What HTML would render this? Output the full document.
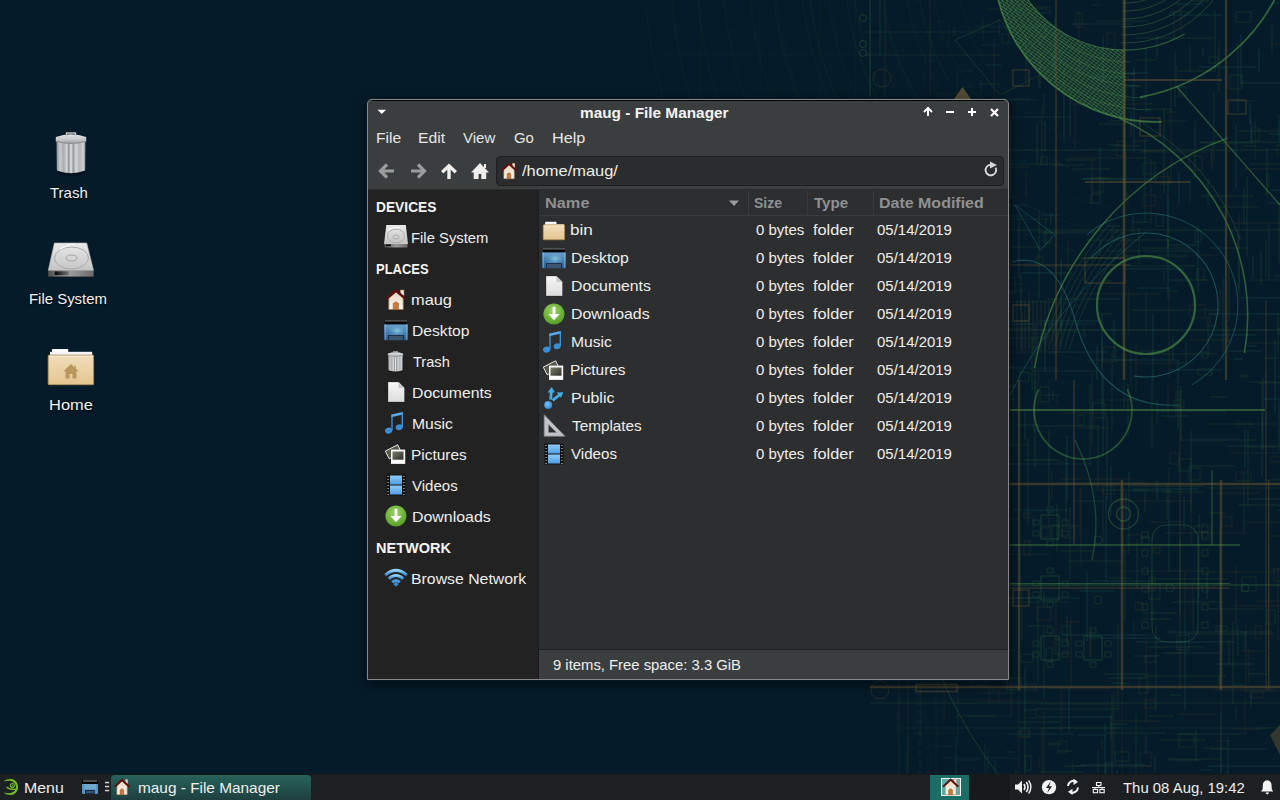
<!DOCTYPE html>
<html><head><meta charset="utf-8">
<style>
*{margin:0;padding:0;box-sizing:border-box}
html,body{width:1280px;height:800px;overflow:hidden;background:#061b29;font-family:"Liberation Sans",sans-serif;position:relative}
.tx{position:absolute;white-space:nowrap;font-size:14.5px;line-height:20px;transform-origin:0 0}
.ic{position:absolute;overflow:visible}
.bx{position:absolute}
</style></head><body>

<svg width="0" height="0" style="position:absolute">
<defs>
<linearGradient id="gTrash" x1="0" x2="1" y1="0" y2="0">
 <stop offset="0" stop-color="#8c8e91"/><stop offset=".12" stop-color="#c9cbce"/><stop offset=".25" stop-color="#a9abae"/>
 <stop offset=".36" stop-color="#d7d9db"/><stop offset=".42" stop-color="#8f9194"/><stop offset=".5" stop-color="#e2e3e4"/>
 <stop offset=".58" stop-color="#959799"/><stop offset=".66" stop-color="#d3d5d7"/><stop offset=".8" stop-color="#b3b5b8"/>
 <stop offset=".92" stop-color="#cfd1d3"/><stop offset="1" stop-color="#86888b"/>
</linearGradient>
<linearGradient id="gLid" x1="0" x2="0" y1="0" y2="1">
 <stop offset="0" stop-color="#e6e7e8"/><stop offset=".6" stop-color="#c4c6c8"/><stop offset="1" stop-color="#9d9fa2"/>
</linearGradient>
<linearGradient id="gDrive" x1="0" x2="0" y1="0" y2="1">
 <stop offset="0" stop-color="#e9e9e9"/><stop offset="1" stop-color="#c4c4c4"/>
</linearGradient>
<linearGradient id="gDriveF" x1="0" x2="1" y1="0" y2="0">
 <stop offset="0" stop-color="#505050"/><stop offset=".5" stop-color="#9a9a9a"/><stop offset="1" stop-color="#6a6a6a"/>
</linearGradient>
<linearGradient id="gSlot" x1="0" x2="1" y1="0" y2="0">
 <stop offset="0" stop-color="#050505"/><stop offset="1" stop-color="#777"/>
</linearGradient>
<linearGradient id="gFold" x1="0" x2="0" y1="0" y2="1">
 <stop offset="0" stop-color="#f1ddbb"/><stop offset="1" stop-color="#e3c590"/>
</linearGradient>
<linearGradient id="gDesk" x1="0" x2="0" y1="0" y2="1">
 <stop offset="0" stop-color="#6aa3d2"/><stop offset=".5" stop-color="#3f79b0"/><stop offset="1" stop-color="#2e5f93"/>
</linearGradient>
<radialGradient id="gDeskR" cx=".55" cy=".4" r=".5">
 <stop offset="0" stop-color="#8fd0df" stop-opacity=".9"/><stop offset="1" stop-color="#4a84b8" stop-opacity="0"/>
</radialGradient>
<linearGradient id="gDoc" x1="0" x2="0" y1="0" y2="1">
 <stop offset="0" stop-color="#f7f7f7"/><stop offset="1" stop-color="#dcdcdc"/>
</linearGradient>
<radialGradient id="gDl" cx=".45" cy=".35" r=".7">
 <stop offset="0" stop-color="#9ed36b"/><stop offset=".7" stop-color="#66ad32"/><stop offset="1" stop-color="#4e9424"/>
</radialGradient>
<linearGradient id="gNote" x1="0" x2="0" y1="0" y2="1">
 <stop offset="0" stop-color="#6ab4ee"/><stop offset="1" stop-color="#3a86cc"/>
</linearGradient>
<linearGradient id="gPic" x1="0" x2="1" y1="0" y2="1">
 <stop offset="0" stop-color="#7a7e6c"/><stop offset="1" stop-color="#2c2f28"/>
</linearGradient>
<linearGradient id="gVid" x1="0" x2="0" y1="0" y2="1">
 <stop offset="0" stop-color="#8ccaf6"/><stop offset="1" stop-color="#4e9ee6"/>
</linearGradient>
<radialGradient id="gBall" cx=".4" cy=".4" r=".6">
 <stop offset="0" stop-color="#7cc4fa"/><stop offset="1" stop-color="#2f86d6"/>
</radialGradient>
<linearGradient id="gWifi" x1="0" x2="0" y1="0" y2="1">
 <stop offset="0" stop-color="#8fd0f5"/><stop offset="1" stop-color="#2f82cf"/>
</linearGradient>
<linearGradient id="gHome" x1="0" x2="0" y1="0" y2="1">
 <stop offset="0" stop-color="#e8d6c0"/><stop offset="1" stop-color="#fdf8f2"/>
</linearGradient>
<linearGradient id="gTask" x1="0" x2="0" y1="0" y2="1">
 <stop offset="0" stop-color="#27615a"/><stop offset="1" stop-color="#1d3d3d"/>
</linearGradient>
</defs></svg>

<svg class="bx" style="left:0;top:0" width="1280" height="800" viewBox="0 0 1280 800"><path d="M1010 117 L1071 117" fill="none" stroke="#3f8040" stroke-width="0.8" opacity="0.24299129714155565"/><path d="M918 451 L918 534" fill="none" stroke="#6a5530" stroke-width="0.8" opacity="0.09368452726079361"/><path d="M1053 54 L1053 70" fill="none" stroke="#2f8a86" stroke-width="0.8" opacity="0.26"/><path d="M1106 733 L1166 733" fill="none" stroke="#3f8040" stroke-width="0.8" opacity="0.26"/><path d="M1039 756 L1039 767" fill="none" stroke="#6a5530" stroke-width="0.8" opacity="0.26"/><path d="M938 91 L938 124" fill="none" stroke="#6a5530" stroke-width="0.8" opacity="0.12626580418233443"/><path d="M1108 145 L1124 145" fill="none" stroke="#3f8040" stroke-width="0.8" opacity="0.26"/><path d="M1128 384 L1128 436" fill="none" stroke="#3f8040" stroke-width="0.8" opacity="0.26"/><path d="M1249 280 L1278 280" fill="none" stroke="#6a5530" stroke-width="0.8" opacity="0.26"/><path d="M978 445 L1029 445" fill="none" stroke="#3f8040" stroke-width="0.8" opacity="0.19116273196939942"/><path d="M995 759 L995 774" fill="none" stroke="#2f8a86" stroke-width="0.8" opacity="0.21965954717862127"/><path d="M1017 722 L1059 722" fill="none" stroke="#3f8040" stroke-width="0.8" opacity="0.25483627400390757"/><path d="M1109 678 L1143 678" fill="none" stroke="#3f8040" stroke-width="0.8" opacity="0.26"/><path d="M1112 353 L1112 430" fill="none" stroke="#3f8040" stroke-width="0.8" opacity="0.26"/><path d="M1146 47 L1146 112" fill="none" stroke="#2f8a86" stroke-width="0.8" opacity="0.26"/><path d="M1034 518 L1034 527" fill="none" stroke="#2f8a86" stroke-width="0.8" opacity="0.26"/><path d="M1124 382 L1124 408" fill="none" stroke="#3f8040" stroke-width="0.8" opacity="0.26"/><path d="M979 303 L979 382" fill="none" stroke="#3f8040" stroke-width="0.8" opacity="0.19344964190299432"/><path d="M1041 215 L1060 215" fill="none" stroke="#2f8a86" stroke-width="0.8" opacity="0.26"/><path d="M991 321 L1029 321" fill="none" stroke="#2f8a86" stroke-width="0.8" opacity="0.2134736919340332"/><path d="M940 136 L940 163" fill="none" stroke="#6a5530" stroke-width="0.8" opacity="0.13059858876422087"/><path d="M1212 141 L1212 172" fill="none" stroke="#6a5530" stroke-width="0.8" opacity="0.26"/><path d="M1028 438 L1028 525" fill="none" stroke="#3f8040" stroke-width="0.8" opacity="0.26"/><path d="M1228 737 L1228 774" fill="none" stroke="#2f8a86" stroke-width="0.8" opacity="0.26"/><path d="M1038 373 L1038 414" fill="none" stroke="#6a5530" stroke-width="0.8" opacity="0.26"/><path d="M964 126 L964 162" fill="none" stroke="#3f8040" stroke-width="0.8" opacity="0.16819607054000696"/><path d="M1107 415 L1107 501" fill="none" stroke="#3f8040" stroke-width="0.8" opacity="0.26"/><path d="M963 291 L1023 291" fill="none" stroke="#3f8040" stroke-width="0.8" opacity="0.1676692438061896"/><path d="M1070 89 L1070 137" fill="none" stroke="#2f8a86" stroke-width="0.8" opacity="0.26"/><path d="M1005 112 L1005 181" fill="none" stroke="#3f8040" stroke-width="0.8" opacity="0.23520400424171264"/><path d="M1157 400 L1157 424" fill="none" stroke="#3f8040" stroke-width="0.8" opacity="0.26"/><path d="M1097 21 L1149 21" fill="none" stroke="#3f8040" stroke-width="0.8" opacity="0.26"/><path d="M984 284 L1006 284" fill="none" stroke="#6a5530" stroke-width="0.8" opacity="0.2022248781990852"/><path d="M1192 255 L1218 255" fill="none" stroke="#6a5530" stroke-width="0.8" opacity="0.26"/><path d="M1207 573 L1207 599" fill="none" stroke="#2f8a86" stroke-width="0.8" opacity="0.26"/><path d="M892 22 L892 53" fill="none" stroke="#3f8040" stroke-width="0.8" opacity="0.05133709798188749"/><path d="M1122 266 L1196 266" fill="none" stroke="#3f8040" stroke-width="0.8" opacity="0.26"/><path d="M1026 171 L1026 197" fill="none" stroke="#6a5530" stroke-width="0.8" opacity="0.26"/><path d="M1073 763 L1073 774" fill="none" stroke="#3f8040" stroke-width="0.8" opacity="0.26"/><path d="M1141 619 L1156 619" fill="none" stroke="#3f8040" stroke-width="0.8" opacity="0.26"/><path d="M1193 581 L1193 628" fill="none" stroke="#6a5530" stroke-width="0.8" opacity="0.26"/><path d="M1134 67 L1134 153" fill="none" stroke="#2f8a86" stroke-width="0.8" opacity="0.26"/><path d="M1177 66 L1177 87" fill="none" stroke="#6a5530" stroke-width="0.8" opacity="0.26"/><path d="M1116 360 L1178 360" fill="none" stroke="#2f8a86" stroke-width="0.8" opacity="0.26"/><path d="M1020 425 L1039 425" fill="none" stroke="#3f8040" stroke-width="0.8" opacity="0.26"/><path d="M1171 80 L1171 149" fill="none" stroke="#6a5530" stroke-width="0.8" opacity="0.26"/><path d="M1229 639 L1229 665" fill="none" stroke="#3f8040" stroke-width="0.8" opacity="0.26"/><path d="M1080 591 L1115 591" fill="none" stroke="#2f8a86" stroke-width="0.8" opacity="0.26"/><path d="M904 573 L986 573" fill="none" stroke="#2f8a86" stroke-width="0.8" opacity="0.0720879409574798"/><path d="M1231 101 L1252 101" fill="none" stroke="#3f8040" stroke-width="0.8" opacity="0.26"/><path d="M1191 471 L1191 543" fill="none" stroke="#6a5530" stroke-width="0.8" opacity="0.26"/><path d="M1069 561 L1123 561" fill="none" stroke="#3f8040" stroke-width="0.8" opacity="0.26"/><path d="M1092 373 L1092 445" fill="none" stroke="#3f8040" stroke-width="0.8" opacity="0.26"/><path d="M991 598 L1040 598" fill="none" stroke="#3f8040" stroke-width="0.8" opacity="0.21249609580210793"/><path d="M1245 343 L1280 343" fill="none" stroke="#6a5530" stroke-width="0.8" opacity="0.26"/><path d="M1061 413 L1108 413" fill="none" stroke="#6a5530" stroke-width="0.8" opacity="0.26"/><path d="M1231 729 L1260 729" fill="none" stroke="#6a5530" stroke-width="0.8" opacity="0.26"/><path d="M935 94 L979 94" fill="none" stroke="#3f8040" stroke-width="0.8" opacity="0.12163738333295342"/><path d="M1051 165 L1084 165" fill="none" stroke="#3f8040" stroke-width="0.8" opacity="0.26"/><path d="M942 554 L942 616" fill="none" stroke="#6a5530" stroke-width="0.8" opacity="0.13289030544964991"/><path d="M935 362 L935 431" fill="none" stroke="#3f8040" stroke-width="0.8" opacity="0.12171549192744575"/><path d="M1075 766 L1151 766" fill="none" stroke="#6a5530" stroke-width="0.8" opacity="0.26"/><path d="M1278 313 L1278 355" fill="none" stroke="#3f8040" stroke-width="0.8" opacity="0.26"/><path d="M1169 15 L1222 15" fill="none" stroke="#2f8a86" stroke-width="0.8" opacity="0.26"/><path d="M1034 400 L1034 433" fill="none" stroke="#3f8040" stroke-width="0.8" opacity="0.26"/><path d="M1247 177 L1247 257" fill="none" stroke="#3f8040" stroke-width="0.8" opacity="0.26"/><path d="M896 603 L926 603" fill="none" stroke="#6a5530" stroke-width="0.8" opacity="0.05823232344414393"/><path d="M1220 523 L1220 609" fill="none" stroke="#2f8a86" stroke-width="0.8" opacity="0.26"/><path d="M1248 442 L1248 507" fill="none" stroke="#3f8040" stroke-width="0.8" opacity="0.26"/><path d="M1200 142 L1280 142" fill="none" stroke="#3f8040" stroke-width="0.8" opacity="0.26"/><path d="M1134 620 L1134 635" fill="none" stroke="#6a5530" stroke-width="0.8" opacity="0.26"/><path d="M1225 351 L1261 351" fill="none" stroke="#2f8a86" stroke-width="0.8" opacity="0.26"/><path d="M987 100 L1038 100" fill="none" stroke="#6a5530" stroke-width="0.8" opacity="0.20660883534034524"/><path d="M1268 203 L1280 203" fill="none" stroke="#3f8040" stroke-width="0.8" opacity="0.26"/><path d="M1092 159 L1092 204" fill="none" stroke="#6a5530" stroke-width="0.8" opacity="0.26"/><path d="M1201 770 L1213 770" fill="none" stroke="#3f8040" stroke-width="0.8" opacity="0.26"/><path d="M1100 147 L1100 194" fill="none" stroke="#2f8a86" stroke-width="0.8" opacity="0.26"/><path d="M1208 335 L1256 335" fill="none" stroke="#2f8a86" stroke-width="0.8" opacity="0.26"/><path d="M1003 167 L1030 167" fill="none" stroke="#6a5530" stroke-width="0.8" opacity="0.2325589824991832"/><path d="M1163 492 L1204 492" fill="none" stroke="#3f8040" stroke-width="0.8" opacity="0.26"/><path d="M1215 11 L1215 70" fill="none" stroke="#3f8040" stroke-width="0.8" opacity="0.26"/><path d="M902 515 L941 515" fill="none" stroke="#3f8040" stroke-width="0.8" opacity="0.06851070683386297"/><path d="M1157 35 L1157 58" fill="none" stroke="#3f8040" stroke-width="0.8" opacity="0.26"/><path d="M985 744 L985 774" fill="none" stroke="#3f8040" stroke-width="0.8" opacity="0.20360799354830295"/><path d="M1266 240 L1266 277" fill="none" stroke="#3f8040" stroke-width="0.8" opacity="0.26"/><path d="M914 216 L975 216" fill="none" stroke="#6a5530" stroke-width="0.8" opacity="0.0870288645365712"/><path d="M882 204 L897 204" fill="none" stroke="#2f8a86" stroke-width="0.8" opacity="0.035717845477563216"/><path d="M1038 232 L1097 232" fill="none" stroke="#3f8040" stroke-width="0.8" opacity="0.26"/><path d="M1092 581 L1154 581" fill="none" stroke="#2f8a86" stroke-width="0.8" opacity="0.26"/><path d="M1168 383 L1168 414" fill="none" stroke="#6a5530" stroke-width="0.8" opacity="0.26"/><path d="M1214 690 L1274 690" fill="none" stroke="#6a5530" stroke-width="0.8" opacity="0.26"/><path d="M1181 440 L1256 440" fill="none" stroke="#3f8040" stroke-width="0.8" opacity="0.26"/><path d="M1114 691 L1114 755" fill="none" stroke="#6a5530" stroke-width="0.8" opacity="0.26"/><path d="M897 493 L983 493" fill="none" stroke="#2f8a86" stroke-width="0.8" opacity="0.059710365880359495"/><path d="M1103 486 L1103 545" fill="none" stroke="#6a5530" stroke-width="0.8" opacity="0.26"/><path d="M881 617 L951 617" fill="none" stroke="#3f8040" stroke-width="0.8" opacity="0.034654312633101134"/><path d="M906 570 L935 570" fill="none" stroke="#3f8040" stroke-width="0.8" opacity="0.0754327315443987"/><path d="M974 585 L974 612" fill="none" stroke="#2f8a86" stroke-width="0.8" opacity="0.18511065419068756"/><path d="M1033 371 L1097 371" fill="none" stroke="#3f8040" stroke-width="0.8" opacity="0.26"/><path d="M1137 60 L1157 60" fill="none" stroke="#3f8040" stroke-width="0.8" opacity="0.26"/><path d="M1157 481 L1157 500" fill="none" stroke="#2f8a86" stroke-width="0.8" opacity="0.26"/><path d="M988 520 L988 585" fill="none" stroke="#2f8a86" stroke-width="0.8" opacity="0.20720229776301125"/><path d="M1087 360 L1133 360" fill="none" stroke="#3f8040" stroke-width="0.8" opacity="0.26"/><path d="M1100 241 L1100 256" fill="none" stroke="#2f8a86" stroke-width="0.8" opacity="0.26"/><path d="M1064 635 L1151 635" fill="none" stroke="#2f8a86" stroke-width="0.8" opacity="0.26"/><path d="M1035 709 L1119 709" fill="none" stroke="#3f8040" stroke-width="0.8" opacity="0.26"/><path d="M937 406 L1023 406" fill="none" stroke="#6a5530" stroke-width="0.8" opacity="0.12463144060869534"/><path d="M1133 216 L1133 234" fill="none" stroke="#3f8040" stroke-width="0.8" opacity="0.26"/><path d="M1239 376 L1249 376" fill="none" stroke="#3f8040" stroke-width="0.8" opacity="0.26"/><path d="M1153 314 L1153 381" fill="none" stroke="#2f8a86" stroke-width="0.8" opacity="0.26"/><path d="M1006 650 L1015 650" fill="none" stroke="#3f8040" stroke-width="0.8" opacity="0.23795072949373033"/><path d="M928 717 L928 774" fill="none" stroke="#3f8040" stroke-width="0.8" opacity="0.11052687593491871"/><path d="M906 302 L906 381" fill="none" stroke="#3f8040" stroke-width="0.8" opacity="0.07473527800578333"/><path d="M1051 213 L1051 225" fill="none" stroke="#3f8040" stroke-width="0.8" opacity="0.26"/><path d="M1145 491 L1145 512" fill="none" stroke="#3f8040" stroke-width="0.8" opacity="0.26"/><path d="M1006 598 L1079 598" fill="none" stroke="#2f8a86" stroke-width="0.8" opacity="0.2376408922180672"/><path d="M1205 488 L1280 488" fill="none" stroke="#6a5530" stroke-width="0.8" opacity="0.26"/><path d="M900 567 L945 567" fill="none" stroke="#6a5530" stroke-width="0.8" opacity="0.06465942238831875"/><path d="M994 38 L994 122" fill="none" stroke="#6a5530" stroke-width="0.8" opacity="0.2185354081960305"/><path d="M1046 218 L1046 247" fill="none" stroke="#3f8040" stroke-width="0.8" opacity="0.26"/><path d="M975 374 L975 437" fill="none" stroke="#3f8040" stroke-width="0.8" opacity="0.1876322657282918"/><path d="M945 161 L1027 161" fill="none" stroke="#2f8a86" stroke-width="0.8" opacity="0.1375770249132878"/><path d="M1061 258 L1061 328" fill="none" stroke="#2f8a86" stroke-width="0.8" opacity="0.26"/><path d="M957 70 L957 106" fill="none" stroke="#3f8040" stroke-width="0.8" opacity="0.1575646122444842"/><path d="M1027 626 L1052 626" fill="none" stroke="#3f8040" stroke-width="0.8" opacity="0.26"/><path d="M1045 320 L1045 371" fill="none" stroke="#2f8a86" stroke-width="0.8" opacity="0.26"/><path d="M1181 386 L1181 441" fill="none" stroke="#3f8040" stroke-width="0.8" opacity="0.26"/><path d="M1081 487 L1081 566" fill="none" stroke="#6a5530" stroke-width="0.8" opacity="0.26"/><path d="M1239 298 L1280 298" fill="none" stroke="#2f8a86" stroke-width="0.8" opacity="0.26"/><path d="M1219 676 L1219 685" fill="none" stroke="#3f8040" stroke-width="0.8" opacity="0.26"/><path d="M1185 622 L1185 710" fill="none" stroke="#2f8a86" stroke-width="0.8" opacity="0.26"/><path d="M1037 717 L1112 717" fill="none" stroke="#2f8a86" stroke-width="0.8" opacity="0.26"/><path d="M979 84 L1000 84" fill="none" stroke="#3f8040" stroke-width="0.8" opacity="0.19400243400797004"/><path d="M1169 501 L1169 572" fill="none" stroke="#2f8a86" stroke-width="0.8" opacity="0.26"/><path d="M1191 1 L1209 1" fill="none" stroke="#3f8040" stroke-width="0.8" opacity="0.26"/><path d="M1002 99 L1030 99" fill="none" stroke="#2f8a86" stroke-width="0.8" opacity="0.22995847005831208"/><path d="M925 54 L925 105" fill="none" stroke="#6a5530" stroke-width="0.8" opacity="0.10538624468921945"/><path d="M969 465 L978 465" fill="none" stroke="#3f8040" stroke-width="0.8" opacity="0.17782897184652585"/><path d="M991 245 L991 322" fill="none" stroke="#6a5530" stroke-width="0.8" opacity="0.2135923727103396"/><path d="M974 191 L974 278" fill="none" stroke="#3f8040" stroke-width="0.8" opacity="0.1850992628600556"/><path d="M958 685 L958 746" fill="none" stroke="#3f8040" stroke-width="0.8" opacity="0.1586748963885133"/><path d="M1147 716 L1174 716" fill="none" stroke="#3f8040" stroke-width="0.8" opacity="0.26"/><path d="M1167 280 L1208 280" fill="none" stroke="#3f8040" stroke-width="0.8" opacity="0.26"/><path d="M1176 391 L1176 416" fill="none" stroke="#6a5530" stroke-width="0.8" opacity="0.26"/><path d="M1208 179 L1208 205" fill="none" stroke="#3f8040" stroke-width="0.8" opacity="0.26"/><path d="M1129 472 L1129 554" fill="none" stroke="#2f8a86" stroke-width="0.8" opacity="0.26"/><path d="M1146 734 L1146 754" fill="none" stroke="#2f8a86" stroke-width="0.8" opacity="0.26"/><path d="M889 461 L889 503" fill="none" stroke="#3f8040" stroke-width="0.8" opacity="0.04785866732282783"/><path d="M1060 551 L1094 551" fill="none" stroke="#3f8040" stroke-width="0.8" opacity="0.26"/><path d="M1253 255 L1253 278" fill="none" stroke="#2f8a86" stroke-width="0.8" opacity="0.26"/><path d="M1146 293 L1146 332" fill="none" stroke="#3f8040" stroke-width="0.8" opacity="0.26"/><path d="M924 61 L938 61" fill="none" stroke="#2f8a86" stroke-width="0.8" opacity="0.1033224617083815"/><path d="M929 746 L954 746" fill="none" stroke="#3f8040" stroke-width="0.8" opacity="0.11291038337896597"/><path d="M1003 622 L1003 637" fill="none" stroke="#2f8a86" stroke-width="0.8" opacity="0.23315448756743362"/><path d="M1097 345 L1097 380" fill="none" stroke="#2f8a86" stroke-width="0.8" opacity="0.26"/><path d="M1044 628 L1044 699" fill="none" stroke="#3f8040" stroke-width="0.8" opacity="0.26"/><path d="M1066 622 L1079 622" fill="none" stroke="#6a5530" stroke-width="0.8" opacity="0.26"/><path d="M1239 262 L1239 293" fill="none" stroke="#3f8040" stroke-width="0.8" opacity="0.26"/><path d="M1167 245 L1197 245" fill="none" stroke="#3f8040" stroke-width="0.8" opacity="0.26"/><path d="M1118 624 L1118 709" fill="none" stroke="#3f8040" stroke-width="0.8" opacity="0.26"/><path d="M974 368 L1060 368" fill="none" stroke="#2f8a86" stroke-width="0.8" opacity="0.18451306916564614"/><path d="M1245 631 L1245 650" fill="none" stroke="#2f8a86" stroke-width="0.8" opacity="0.26"/><path d="M1201 572 L1276 572" fill="none" stroke="#6a5530" stroke-width="0.8" opacity="0.26"/><path d="M1011 247 L1049 247" fill="none" stroke="#3f8040" stroke-width="0.8" opacity="0.24556987710153716"/><path d="M1037 124 L1037 165" fill="none" stroke="#3f8040" stroke-width="0.8" opacity="0.26"/><path d="M1098 124 L1141 124" fill="none" stroke="#3f8040" stroke-width="0.8" opacity="0.26"/><path d="M986 65 L1002 65" fill="none" stroke="#2f8a86" stroke-width="0.8" opacity="0.20467935551696298"/><path d="M1269 134 L1280 134" fill="none" stroke="#2f8a86" stroke-width="0.8" opacity="0.26"/><path d="M1150 579 L1227 579" fill="none" stroke="#3f8040" stroke-width="0.8" opacity="0.26"/><path d="M998 216 L1028 216" fill="none" stroke="#3f8040" stroke-width="0.8" opacity="0.22355022133110763"/><path d="M960 192 L960 220" fill="none" stroke="#6a5530" stroke-width="0.8" opacity="0.16197355907863772"/><path d="M1243 146 L1256 146" fill="none" stroke="#3f8040" stroke-width="0.8" opacity="0.26"/><path d="M1083 179 L1157 179" fill="none" stroke="#2f8a86" stroke-width="0.8" opacity="0.26"/><path d="M921 367 L996 367" fill="none" stroke="#2f8a86" stroke-width="0.8" opacity="0.09901607344239838"/><path d="M896 227 L914 227" fill="none" stroke="#6a5530" stroke-width="0.8" opacity="0.058735212534467965"/><path d="M1211 150 L1211 164" fill="none" stroke="#6a5530" stroke-width="0.8" opacity="0.26"/><path d="M984 602 L1070 602" fill="none" stroke="#3f8040" stroke-width="0.8" opacity="0.20146634439936903"/><path d="M1164 271 L1164 282" fill="none" stroke="#3f8040" stroke-width="0.8" opacity="0.26"/><path d="M962 197 L1019 197" fill="none" stroke="#6a5530" stroke-width="0.8" opacity="0.16508468434153462"/><path d="M1208 317 L1208 355" fill="none" stroke="#3f8040" stroke-width="0.8" opacity="0.26"/><path d="M893 384 L893 431" fill="none" stroke="#2f8a86" stroke-width="0.8" opacity="0.05295328145424086"/><path d="M1038 426 L1099 426" fill="none" stroke="#3f8040" stroke-width="0.8" opacity="0.26"/><path d="M1039 210 L1039 299" fill="none" stroke="#3f8040" stroke-width="0.8" opacity="0.26"/><path d="M901 577 L901 657" fill="none" stroke="#2f8a86" stroke-width="0.8" opacity="0.06588444458719503"/><path d="M1226 771 L1226 774" fill="none" stroke="#6a5530" stroke-width="0.8" opacity="0.26"/><path d="M1042 729 L1042 773" fill="none" stroke="#6a5530" stroke-width="0.8" opacity="0.26"/><path d="M1208 314 L1280 314" fill="none" stroke="#2f8a86" stroke-width="0.8" opacity="0.26"/><path d="M932 40 L932 60" fill="none" stroke="#2f8a86" stroke-width="0.8" opacity="0.11698381207616879"/><path d="M1129 287 L1129 336" fill="none" stroke="#6a5530" stroke-width="0.8" opacity="0.26"/><path d="M945 133 L945 146" fill="none" stroke="#2f8a86" stroke-width="0.8" opacity="0.13767957015896787"/><path d="M1202 748 L1226 748" fill="none" stroke="#6a5530" stroke-width="0.8" opacity="0.26"/><path d="M897 707 L897 740" fill="none" stroke="#2f8a86" stroke-width="0.8" opacity="0.060773270160744124"/><path d="M1165 533 L1246 533" fill="none" stroke="#6a5530" stroke-width="0.8" opacity="0.26"/><path d="M1126 152 L1126 199" fill="none" stroke="#6a5530" stroke-width="0.8" opacity="0.26"/><path d="M1255 121 L1255 159" fill="none" stroke="#6a5530" stroke-width="0.8" opacity="0.26"/><path d="M1170 695 L1181 695" fill="none" stroke="#3f8040" stroke-width="0.8" opacity="0.26"/><path d="M1010 302 L1055 302" fill="none" stroke="#3f8040" stroke-width="0.8" opacity="0.24323181946966918"/><path d="M1003 193 L1003 233" fill="none" stroke="#3f8040" stroke-width="0.8" opacity="0.23283755398322664"/><path d="M1055 18 L1055 77" fill="none" stroke="#2f8a86" stroke-width="0.8" opacity="0.26"/><path d="M1059 479 L1134 479" fill="none" stroke="#6a5530" stroke-width="0.8" opacity="0.26"/><path d="M1040 52 L1040 89" fill="none" stroke="#3f8040" stroke-width="0.8" opacity="0.26"/><path d="M1057 395 L1057 406" fill="none" stroke="#6a5530" stroke-width="0.8" opacity="0.26"/><path d="M1173 602 L1223 602" fill="none" stroke="#3f8040" stroke-width="0.8" opacity="0.26"/><path d="M1238 505 L1280 505" fill="none" stroke="#3f8040" stroke-width="0.8" opacity="0.26"/><path d="M1278 567 L1278 641" fill="none" stroke="#6a5530" stroke-width="0.8" opacity="0.26"/><path d="M1234 223 L1280 223" fill="none" stroke="#6a5530" stroke-width="0.8" opacity="0.26"/><path d="M1168 171 L1168 247" fill="none" stroke="#3f8040" stroke-width="0.8" opacity="0.26"/><path d="M1239 213 L1239 288" fill="none" stroke="#6a5530" stroke-width="0.8" opacity="0.26"/><path d="M1266 372 L1266 428" fill="none" stroke="#6a5530" stroke-width="0.8" opacity="0.26"/><path d="M895 141 L916 141" fill="none" stroke="#3f8040" stroke-width="0.8" opacity="0.056441486919763646"/><path d="M1238 131 L1280 131" fill="none" stroke="#3f8040" stroke-width="0.8" opacity="0.26"/><path d="M899 664 L987 664" fill="none" stroke="#2f8a86" stroke-width="0.8" opacity="0.06407152469163487"/><path d="M1112 683 L1129 683" fill="none" stroke="#2f8a86" stroke-width="0.8" opacity="0.26"/><path d="M1029 291 L1029 329" fill="none" stroke="#6a5530" stroke-width="0.8" opacity="0.26"/><path d="M1186 342 L1186 365" fill="none" stroke="#3f8040" stroke-width="0.8" opacity="0.26"/><path d="M1086 240 L1174 240" fill="none" stroke="#3f8040" stroke-width="0.8" opacity="0.26"/><path d="M1179 172 L1179 203" fill="none" stroke="#2f8a86" stroke-width="0.8" opacity="0.26"/><path d="M1026 37 L1026 85" fill="none" stroke="#3f8040" stroke-width="0.8" opacity="0.26"/><path d="M881 275 L898 275" fill="none" stroke="#3f8040" stroke-width="0.8" opacity="0.03420007063916889"/><path d="M1045 233 L1064 233" fill="none" stroke="#3f8040" stroke-width="0.8" opacity="0.26"/><path d="M1070 104 L1155 104" fill="none" stroke="#6a5530" stroke-width="0.8" opacity="0.26"/><path d="M1060 49 L1060 69" fill="none" stroke="#3f8040" stroke-width="0.8" opacity="0.26"/><path d="M986 9 L1047 9" fill="none" stroke="#3f8040" stroke-width="0.8" opacity="0.20425589597700541"/><path d="M1111 466 L1111 516" fill="none" stroke="#2f8a86" stroke-width="0.8" opacity="0.26"/><path d="M1241 34 L1241 86" fill="none" stroke="#2f8a86" stroke-width="0.8" opacity="0.26"/><path d="M944 706 L944 722" fill="none" stroke="#6a5530" stroke-width="0.8" opacity="0.1359908033009355"/><path d="M960 471 L1009 471" fill="none" stroke="#2f8a86" stroke-width="0.8" opacity="0.16218687368085805"/><path d="M950 239 L982 239" fill="none" stroke="#3f8040" stroke-width="0.8" opacity="0.14601565853189236"/><path d="M1170 370 L1222 370" fill="none" stroke="#2f8a86" stroke-width="0.8" opacity="0.26"/><path d="M1178 360 L1178 429" fill="none" stroke="#2f8a86" stroke-width="0.8" opacity="0.26"/><path d="M1279 202 L1279 263" fill="none" stroke="#3f8040" stroke-width="0.8" opacity="0.26"/><path d="M1180 538 L1180 615" fill="none" stroke="#3f8040" stroke-width="0.8" opacity="0.26"/><path d="M1102 338 L1102 410" fill="none" stroke="#3f8040" stroke-width="0.8" opacity="0.26"/><path d="M1251 692 L1251 707" fill="none" stroke="#3f8040" stroke-width="0.8" opacity="0.26"/><path d="M1242 651 L1267 651" fill="none" stroke="#6a5530" stroke-width="0.8" opacity="0.26"/><path d="M1011 681 L1011 716" fill="none" stroke="#6a5530" stroke-width="0.8" opacity="0.24496640775173173"/><path d="M1221 713 L1221 774" fill="none" stroke="#2f8a86" stroke-width="0.8" opacity="0.26"/><path d="M1092 5 L1102 5" fill="none" stroke="#6a5530" stroke-width="0.8" opacity="0.26"/><path d="M1003 164 L1062 164" fill="none" stroke="#3f8040" stroke-width="0.8" opacity="0.23253804238871897"/><path d="M949 25 L949 43" fill="none" stroke="#6a5530" stroke-width="0.8" opacity="0.14400493766357525"/><path d="M937 22 L948 22" fill="none" stroke="#3f8040" stroke-width="0.8" opacity="0.12469703231365148"/><path d="M1175 51 L1175 107" fill="none" stroke="#3f8040" stroke-width="0.8" opacity="0.26"/><path d="M1262 413 L1262 476" fill="none" stroke="#2f8a86" stroke-width="0.8" opacity="0.26"/><path d="M962 87 L973 87" fill="none" stroke="#3f8040" stroke-width="0.8" opacity="0.16622021900157843"/><path d="M1133 222 L1149 222" fill="none" stroke="#3f8040" stroke-width="0.8" opacity="0.26"/><path d="M1139 228 L1139 264" fill="none" stroke="#3f8040" stroke-width="0.8" opacity="0.26"/><path d="M983 219 L1049 219" fill="none" stroke="#3f8040" stroke-width="0.8" opacity="0.1993564729732523"/><path d="M1188 466 L1235 466" fill="none" stroke="#3f8040" stroke-width="0.8" opacity="0.26"/><path d="M892 320 L892 363" fill="none" stroke="#3f8040" stroke-width="0.8" opacity="0.05263788419132166"/><path d="M1162 416 L1188 416" fill="none" stroke="#3f8040" stroke-width="0.8" opacity="0.26"/><path d="M995 338 L1046 338" fill="none" stroke="#3f8040" stroke-width="0.8" opacity="0.21912129313305997"/><path d="M1271 3 L1280 3" fill="none" stroke="#2f8a86" stroke-width="0.8" opacity="0.26"/><path d="M1210 749 L1267 749" fill="none" stroke="#3f8040" stroke-width="0.8" opacity="0.26"/><path d="M944 631 L944 716" fill="none" stroke="#6a5530" stroke-width="0.8" opacity="0.1357819843621875"/><path d="M924 493 L939 493" fill="none" stroke="#3f8040" stroke-width="0.8" opacity="0.10395010799290506"/><path d="M1022 311 L1022 351" fill="none" stroke="#3f8040" stroke-width="0.8" opacity="0.26"/><path d="M1138 288 L1171 288" fill="none" stroke="#2f8a86" stroke-width="0.8" opacity="0.26"/><path d="M1080 294 L1161 294" fill="none" stroke="#6a5530" stroke-width="0.8" opacity="0.26"/><path d="M931 460 L931 524" fill="none" stroke="#3f8040" stroke-width="0.8" opacity="0.11497233998405913"/><path d="M1011 120 L1011 197" fill="none" stroke="#3f8040" stroke-width="0.8" opacity="0.2448291331464493"/><path d="M1056 599 L1056 654" fill="none" stroke="#6a5530" stroke-width="0.8" opacity="0.26"/><path d="M1137 539 L1137 589" fill="none" stroke="#3f8040" stroke-width="0.8" opacity="0.26"/><path d="M1161 653 L1182 653" fill="none" stroke="#6a5530" stroke-width="0.8" opacity="0.26"/><path d="M1169 467 L1169 503" fill="none" stroke="#6a5530" stroke-width="0.8" opacity="0.26"/><path d="M956 755 L956 774" fill="none" stroke="#3f8040" stroke-width="0.8" opacity="0.1555277174573191"/><path d="M1143 151 L1164 151" fill="none" stroke="#6a5530" stroke-width="0.8" opacity="0.26"/><path d="M1173 337 L1173 361" fill="none" stroke="#3f8040" stroke-width="0.8" opacity="0.26"/><path d="M1234 359 L1243 359" fill="none" stroke="#2f8a86" stroke-width="0.8" opacity="0.26"/><path d="M1080 489 L1080 535" fill="none" stroke="#6a5530" stroke-width="0.8" opacity="0.26"/><path d="M1175 4 L1203 4" fill="none" stroke="#2f8a86" stroke-width="0.8" opacity="0.26"/><path d="M1115 501 L1192 501" fill="none" stroke="#6a5530" stroke-width="0.8" opacity="0.26"/><path d="M1137 351 L1170 351" fill="none" stroke="#3f8040" stroke-width="0.8" opacity="0.26"/><path d="M977 310 L977 376" fill="none" stroke="#6a5530" stroke-width="0.8" opacity="0.19005747935582495"/><path d="M1049 352 L1108 352" fill="none" stroke="#2f8a86" stroke-width="0.8" opacity="0.26"/><path d="M1144 676 L1226 676" fill="none" stroke="#3f8040" stroke-width="0.8" opacity="0.26"/><path d="M1035 379 L1035 467" fill="none" stroke="#3f8040" stroke-width="0.8" opacity="0.26"/><path d="M967 554 L1053 554" fill="none" stroke="#6a5530" stroke-width="0.8" opacity="0.17412296656182175"/><path d="M920 445 L973 445" fill="none" stroke="#2f8a86" stroke-width="0.8" opacity="0.09820654698203261"/><path d="M1136 642 L1186 642" fill="none" stroke="#2f8a86" stroke-width="0.8" opacity="0.26"/><path d="M1063 766 L1086 766" fill="none" stroke="#3f8040" stroke-width="0.8" opacity="0.26"/><path d="M1126 493 L1126 522" fill="none" stroke="#2f8a86" stroke-width="0.8" opacity="0.26"/><path d="M885 324 L928 324" fill="none" stroke="#3f8040" stroke-width="0.8" opacity="0.0411504205977189"/><path d="M924 235 L965 235" fill="none" stroke="#6a5530" stroke-width="0.8" opacity="0.10351800848452558"/><path d="M1264 358 L1280 358" fill="none" stroke="#3f8040" stroke-width="0.8" opacity="0.26"/><path d="M1134 363 L1188 363" fill="none" stroke="#6a5530" stroke-width="0.8" opacity="0.26"/><path d="M939 516 L939 592" fill="none" stroke="#2f8a86" stroke-width="0.8" opacity="0.127571249302742"/><path d="M998 424 L998 443" fill="none" stroke="#2f8a86" stroke-width="0.8" opacity="0.22382250952666366"/><path d="M1220 207 L1259 207" fill="none" stroke="#3f8040" stroke-width="0.8" opacity="0.26"/><path d="M1152 373 L1152 447" fill="none" stroke="#3f8040" stroke-width="0.8" opacity="0.26"/><path d="M1142 248 L1190 248" fill="none" stroke="#3f8040" stroke-width="0.8" opacity="0.26"/><path d="M1025 719 L1025 774" fill="none" stroke="#3f8040" stroke-width="0.8" opacity="0.26"/><path d="M1106 251 L1191 251" fill="none" stroke="#3f8040" stroke-width="0.8" opacity="0.26"/><path d="M886 9 L886 95" fill="none" stroke="#3f8040" stroke-width="0.8" opacity="0.0422407972607544"/><path d="M921 110 L921 138" fill="none" stroke="#2f8a86" stroke-width="0.8" opacity="0.09848275919270988"/><path d="M941 700 L1014 700" fill="none" stroke="#6a5530" stroke-width="0.8" opacity="0.1317367382016152"/><path d="M1155 756 L1155 772" fill="none" stroke="#3f8040" stroke-width="0.8" opacity="0.26"/><path d="M1157 411 L1226 411" fill="none" stroke="#2f8a86" stroke-width="0.8" opacity="0.26"/><path d="M927 92 L927 134" fill="none" stroke="#6a5530" stroke-width="0.8" opacity="0.10853740551167324"/><path d="M1103 375 L1103 457" fill="none" stroke="#2f8a86" stroke-width="0.8" opacity="0.26"/><path d="M946 464 L1014 464" fill="none" stroke="#6a5530" stroke-width="0.8" opacity="0.13950065196084047"/><path d="M1067 435 L1067 498" fill="none" stroke="#2f8a86" stroke-width="0.8" opacity="0.26"/><path d="M1048 744 L1062 744" fill="none" stroke="#3f8040" stroke-width="0.8" opacity="0.26"/><path d="M891 472 L955 472" fill="none" stroke="#3f8040" stroke-width="0.8" opacity="0.0510441863787461"/><path d="M918 375 L918 445" fill="none" stroke="#6a5530" stroke-width="0.8" opacity="0.0935842222862439"/><path d="M1167 484 L1167 520" fill="none" stroke="#3f8040" stroke-width="0.8" opacity="0.26"/><path d="M1191 429 L1191 512" fill="none" stroke="#3f8040" stroke-width="0.8" opacity="0.26"/><path d="M1049 429 L1049 505" fill="none" stroke="#3f8040" stroke-width="0.8" opacity="0.26"/><path d="M1077 258 L1166 258" fill="none" stroke="#3f8040" stroke-width="0.8" opacity="0.26"/><path d="M1142 613 L1177 613" fill="none" stroke="#3f8040" stroke-width="0.8" opacity="0.26"/><path d="M931 753 L931 768" fill="none" stroke="#3f8040" stroke-width="0.8" opacity="0.11542095535392498"/><path d="M1102 314 L1102 369" fill="none" stroke="#2f8a86" stroke-width="0.8" opacity="0.26"/><path d="M882 147 L966 147" fill="none" stroke="#3f8040" stroke-width="0.8" opacity="0.03653694048641502"/><path d="M1244 473 L1244 532" fill="none" stroke="#3f8040" stroke-width="0.8" opacity="0.26"/><path d="M1147 354 L1217 354" fill="none" stroke="#3f8040" stroke-width="0.8" opacity="0.26"/><path d="M1228 326 L1228 343" fill="none" stroke="#3f8040" stroke-width="0.8" opacity="0.26"/><path d="M1209 609 L1263 609" fill="none" stroke="#3f8040" stroke-width="0.8" opacity="0.26"/><path d="M954 27 L954 36" fill="none" stroke="#3f8040" stroke-width="0.8" opacity="0.15260461072742984"/><path d="M1089 638 L1160 638" fill="none" stroke="#2f8a86" stroke-width="0.8" opacity="0.26"/><path d="M1247 346 L1257 346" fill="none" stroke="#2f8a86" stroke-width="0.8" opacity="0.26"/><path d="M1277 510 L1280 510" fill="none" stroke="#2f8a86" stroke-width="0.8" opacity="0.26"/><path d="M913 365 L913 447" fill="none" stroke="#3f8040" stroke-width="0.8" opacity="0.086401078320509"/><path d="M884 518 L884 607" fill="none" stroke="#3f8040" stroke-width="0.8" opacity="0.03856285478506007"/><path d="M929 366 L929 396" fill="none" stroke="#6a5530" stroke-width="0.8" opacity="0.11137585262827206"/><path d="M1178 714 L1216 714" fill="none" stroke="#6a5530" stroke-width="0.8" opacity="0.26"/><path d="M914 487 L980 487" fill="none" stroke="#2f8a86" stroke-width="0.8" opacity="0.08728824817048872"/><path d="M1236 707 L1236 719" fill="none" stroke="#3f8040" stroke-width="0.8" opacity="0.26"/><path d="M886 504 L886 579" fill="none" stroke="#3f8040" stroke-width="0.8" opacity="0.04207421790186868"/><path d="M1005 464 L1092 464" fill="none" stroke="#2f8a86" stroke-width="0.8" opacity="0.2356216280470583"/><path d="M1007 734 L1074 734" fill="none" stroke="#2f8a86" stroke-width="0.8" opacity="0.23808167240707295"/><path d="M938 617 L976 617" fill="none" stroke="#6a5530" stroke-width="0.8" opacity="0.12668924322821898"/><path d="M1047 299 L1120 299" fill="none" stroke="#3f8040" stroke-width="0.8" opacity="0.26"/><path d="M1107 226 L1120 226" fill="none" stroke="#3f8040" stroke-width="0.8" opacity="0.26"/><path d="M1170 12 L1191 12" fill="none" stroke="#3f8040" stroke-width="0.8" opacity="0.26"/><path d="M1271 190 L1280 190" fill="none" stroke="#2f8a86" stroke-width="0.8" opacity="0.26"/><path d="M1238 625 L1238 656" fill="none" stroke="#3f8040" stroke-width="0.8" opacity="0.26"/><path d="M987 122 L987 205" fill="none" stroke="#3f8040" stroke-width="0.8" opacity="0.2067149563478306"/><path d="M936 689 L936 774" fill="none" stroke="#6a5530" stroke-width="0.8" opacity="0.12393533540993228"/><path d="M1220 625 L1220 689" fill="none" stroke="#2f8a86" stroke-width="0.8" opacity="0.26"/><path d="M914 429 L987 429" fill="none" stroke="#6a5530" stroke-width="0.8" opacity="0.08779131294032765"/><path d="M1169 760 L1202 760" fill="none" stroke="#3f8040" stroke-width="0.8" opacity="0.26"/><path d="M1066 160 L1095 160" fill="none" stroke="#3f8040" stroke-width="0.8" opacity="0.26"/><path d="M1064 68 L1064 142" fill="none" stroke="#3f8040" stroke-width="0.8" opacity="0.26"/><path d="M1112 694 L1112 774" fill="none" stroke="#3f8040" stroke-width="0.8" opacity="0.26"/><path d="M1116 146 L1140 146" fill="none" stroke="#6a5530" stroke-width="0.8" opacity="0.26"/><path d="M996 447 L996 485" fill="none" stroke="#6a5530" stroke-width="0.8" opacity="0.2208676501798388"/><path d="M1249 382 L1280 382" fill="none" stroke="#3f8040" stroke-width="0.8" opacity="0.26"/><path d="M1195 121 L1195 178" fill="none" stroke="#3f8040" stroke-width="0.8" opacity="0.26"/><path d="M1123 73 L1148 73" fill="none" stroke="#2f8a86" stroke-width="0.8" opacity="0.26"/><path d="M965 716 L996 716" fill="none" stroke="#3f8040" stroke-width="0.8" opacity="0.17132901422707728"/><path d="M1187 634 L1274 634" fill="none" stroke="#3f8040" stroke-width="0.8" opacity="0.26"/><path d="M1016 770 L1016 774" fill="none" stroke="#3f8040" stroke-width="0.8" opacity="0.25274806425454394"/><path d="M1103 674 L1149 674" fill="none" stroke="#3f8040" stroke-width="0.8" opacity="0.26"/><path d="M1136 714 L1136 774" fill="none" stroke="#3f8040" stroke-width="0.8" opacity="0.26"/><path d="M1106 496 L1106 582" fill="none" stroke="#2f8a86" stroke-width="0.8" opacity="0.26"/><path d="M1220 287 L1220 314" fill="none" stroke="#6a5530" stroke-width="0.8" opacity="0.26"/><path d="M1257 728 L1270 728" fill="none" stroke="#3f8040" stroke-width="0.8" opacity="0.26"/><path d="M899 609 L899 675" fill="none" stroke="#2f8a86" stroke-width="0.8" opacity="0.06307746900347687"/><path d="M938 584 L1023 584" fill="none" stroke="#3f8040" stroke-width="0.8" opacity="0.12661841784785427"/><path d="M1057 505 L1057 552" fill="none" stroke="#3f8040" stroke-width="0.8" opacity="0.26"/><path d="M930 373 L951 373" fill="none" stroke="#6a5530" stroke-width="0.8" opacity="0.11319331790312409"/><path d="M1246 691 L1280 691" fill="none" stroke="#6a5530" stroke-width="0.8" opacity="0.26"/><path d="M943 645 L957 645" fill="none" stroke="#3f8040" stroke-width="0.8" opacity="0.1345215124114699"/><path d="M936 346 L952 346" fill="none" stroke="#2f8a86" stroke-width="0.8" opacity="0.12334581178355836"/><path d="M1131 350 L1131 386" fill="none" stroke="#6a5530" stroke-width="0.8" opacity="0.26"/><path d="M1131 111 L1131 137" fill="none" stroke="#3f8040" stroke-width="0.8" opacity="0.26"/><path d="M1061 688 L1061 732" fill="none" stroke="#6a5530" stroke-width="0.8" opacity="0.26"/><path d="M1045 121 L1045 151" fill="none" stroke="#3f8040" stroke-width="0.8" opacity="0.26"/><path d="M947 380 L947 414" fill="none" stroke="#2f8a86" stroke-width="0.8" opacity="0.1415686076837547"/><path d="M1271 44 L1280 44" fill="none" stroke="#6a5530" stroke-width="0.8" opacity="0.26"/><path d="M1214 92 L1214 162" fill="none" stroke="#3f8040" stroke-width="0.8" opacity="0.26"/><path d="M985 185 L985 212" fill="none" stroke="#2f8a86" stroke-width="0.8" opacity="0.20248981497254714"/><path d="M1238 44 L1238 112" fill="none" stroke="#3f8040" stroke-width="0.8" opacity="0.26"/><path d="M1136 342 L1136 392" fill="none" stroke="#6a5530" stroke-width="0.8" opacity="0.26"/><path d="M1196 730 L1196 762" fill="none" stroke="#3f8040" stroke-width="0.8" opacity="0.26"/><path d="M1245 169 L1280 169" fill="none" stroke="#6a5530" stroke-width="0.8" opacity="0.26"/><path d="M1089 178 L1111 178" fill="none" stroke="#3f8040" stroke-width="0.8" opacity="0.26"/><path d="M1236 566 L1236 636" fill="none" stroke="#6a5530" stroke-width="0.8" opacity="0.26"/><path d="M1125 548 L1125 622" fill="none" stroke="#3f8040" stroke-width="0.8" opacity="0.26"/><path d="M906 567 L948 567" fill="none" stroke="#3f8040" stroke-width="0.8" opacity="0.07520194396345263"/><path d="M1019 218 L1019 278" fill="none" stroke="#2f8a86" stroke-width="0.8" opacity="0.25846688321152794"/><path d="M1044 591 L1044 609" fill="none" stroke="#3f8040" stroke-width="0.8" opacity="0.26"/><path d="M1105 763 L1116 763" fill="none" stroke="#3f8040" stroke-width="0.8" opacity="0.26"/><path d="M1223 276 L1223 360" fill="none" stroke="#3f8040" stroke-width="0.8" opacity="0.26"/><path d="M1166 632 L1245 632" fill="none" stroke="#3f8040" stroke-width="0.8" opacity="0.26"/><path d="M1227 446 L1280 446" fill="none" stroke="#3f8040" stroke-width="0.8" opacity="0.26"/><path d="M1262 383 L1262 433" fill="none" stroke="#6a5530" stroke-width="0.8" opacity="0.26"/><path d="M1267 173 L1267 196" fill="none" stroke="#3f8040" stroke-width="0.8" opacity="0.26"/><path d="M1102 739 L1102 749" fill="none" stroke="#6a5530" stroke-width="0.8" opacity="0.26"/><path d="M1215 493 L1261 493" fill="none" stroke="#6a5530" stroke-width="0.8" opacity="0.26"/><path d="M921 673 L921 740" fill="none" stroke="#3f8040" stroke-width="0.8" opacity="0.09936197279360033"/><path d="M1066 453 L1066 524" fill="none" stroke="#3f8040" stroke-width="0.8" opacity="0.26"/><path d="M1042 106 L1042 163" fill="none" stroke="#6a5530" stroke-width="0.8" opacity="0.26"/><path d="M1109 578 L1131 578" fill="none" stroke="#3f8040" stroke-width="0.8" opacity="0.26"/><path d="M1035 325 L1035 402" fill="none" stroke="#3f8040" stroke-width="0.8" opacity="0.26"/><path d="M1257 601 L1280 601" fill="none" stroke="#6a5530" stroke-width="0.8" opacity="0.26"/><path d="M1166 653 L1220 653" fill="none" stroke="#3f8040" stroke-width="0.8" opacity="0.26"/><path d="M1219 41 L1219 92" fill="none" stroke="#3f8040" stroke-width="0.8" opacity="0.26"/><path d="M1049 490 L1049 528" fill="none" stroke="#6a5530" stroke-width="0.8" opacity="0.26"/><path d="M1053 391 L1053 400" fill="none" stroke="#6a5530" stroke-width="0.8" opacity="0.26"/><path d="M1039 772 L1084 772" fill="none" stroke="#3f8040" stroke-width="0.8" opacity="0.26"/><path d="M1234 685 L1245 685" fill="none" stroke="#3f8040" stroke-width="0.8" opacity="0.26"/><path d="M1129 486 L1204 486" fill="none" stroke="#3f8040" stroke-width="0.8" opacity="0.26"/><path d="M980 403 L980 446" fill="none" stroke="#3f8040" stroke-width="0.8" opacity="0.1953777401827629"/><path d="M1002 501 L1002 519" fill="none" stroke="#3f8040" stroke-width="0.8" opacity="0.23101763342253745"/><path d="M1116 721 L1160 721" fill="none" stroke="#6a5530" stroke-width="0.8" opacity="0.26"/><path d="M1246 447 L1277 447" fill="none" stroke="#3f8040" stroke-width="0.8" opacity="0.26"/><path d="M995 352 L1060 352" fill="none" stroke="#6a5530" stroke-width="0.8" opacity="0.21915882383164545"/><path d="M960 550 L1006 550" fill="none" stroke="#3f8040" stroke-width="0.8" opacity="0.16327471000383173"/><path d="M1068 240 L1068 268" fill="none" stroke="#6a5530" stroke-width="0.8" opacity="0.26"/><path d="M1098 750 L1098 774" fill="none" stroke="#3f8040" stroke-width="0.8" opacity="0.26"/><path d="M1261 251 L1261 285" fill="none" stroke="#3f8040" stroke-width="0.8" opacity="0.26"/><path d="M1275 229 L1280 229" fill="none" stroke="#6a5530" stroke-width="0.8" opacity="0.26"/><path d="M1122 269 L1184 269" fill="none" stroke="#2f8a86" stroke-width="0.8" opacity="0.26"/><path d="M1022 590 L1022 641" fill="none" stroke="#6a5530" stroke-width="0.8" opacity="0.26"/><path d="M1147 109 L1172 109" fill="none" stroke="#3f8040" stroke-width="0.8" opacity="0.26"/><path d="M1087 572 L1087 641" fill="none" stroke="#2f8a86" stroke-width="0.8" opacity="0.26"/><path d="M1132 489 L1198 489" fill="none" stroke="#2f8a86" stroke-width="0.8" opacity="0.26"/><path d="M882 593 L882 649" fill="none" stroke="#2f8a86" stroke-width="0.8" opacity="0.03531047386505891"/><path d="M1277 116 L1280 116" fill="none" stroke="#3f8040" stroke-width="0.8" opacity="0.26"/><path d="M1123 294 L1123 339" fill="none" stroke="#2f8a86" stroke-width="0.8" opacity="0.26"/><path d="M1021 273 L1072 273" fill="none" stroke="#2f8a86" stroke-width="0.8" opacity="0.26"/><path d="M883 577 L883 666" fill="none" stroke="#2f8a86" stroke-width="0.8" opacity="0.03689529762864588"/><path d="M954 235 L974 235" fill="none" stroke="#2f8a86" stroke-width="0.8" opacity="0.15223753086453884"/><path d="M915 712 L950 712" fill="none" stroke="#6a5530" stroke-width="0.8" opacity="0.08965432564962411"/><path d="M962 330 L962 413" fill="none" stroke="#3f8040" stroke-width="0.8" opacity="0.1653011947265147"/><path d="M983 693 L1015 693" fill="none" stroke="#3f8040" stroke-width="0.8" opacity="0.1992566401303379"/><path d="M1279 401 L1279 451" fill="none" stroke="#2f8a86" stroke-width="0.8" opacity="0.26"/><path d="M1023 460 L1060 460" fill="none" stroke="#3f8040" stroke-width="0.8" opacity="0.26"/><path d="M1090 77 L1129 77" fill="none" stroke="#2f8a86" stroke-width="0.8" opacity="0.26"/><path d="M1251 119 L1251 143" fill="none" stroke="#2f8a86" stroke-width="0.8" opacity="0.26"/><path d="M1056 483 L1146 483" fill="none" stroke="#3f8040" stroke-width="0.8" opacity="0.26"/><path d="M1179 71 L1216 71" fill="none" stroke="#3f8040" stroke-width="0.8" opacity="0.26"/><path d="M1210 397 L1227 397" fill="none" stroke="#3f8040" stroke-width="0.8" opacity="0.26"/><path d="M1208 766 L1280 766" fill="none" stroke="#2f8a86" stroke-width="0.8" opacity="0.26"/><path d="M1090 632 L1090 657" fill="none" stroke="#6a5530" stroke-width="0.8" opacity="0.26"/><path d="M904 437 L921 437" fill="none" stroke="#3f8040" stroke-width="0.8" opacity="0.07161044157716501"/><path d="M884 2 L951 2" fill="none" stroke="#3f8040" stroke-width="0.8" opacity="0.03947692418071012"/><path d="M1039 76 L1039 86" fill="none" stroke="#3f8040" stroke-width="0.8" opacity="0.26"/><path d="M1079 428 L1109 428" fill="none" stroke="#6a5530" stroke-width="0.8" opacity="0.26"/><path d="M1044 94 L1044 115" fill="none" stroke="#3f8040" stroke-width="0.8" opacity="0.26"/><path d="M910 734 L959 734" fill="none" stroke="#2f8a86" stroke-width="0.8" opacity="0.08198454619085978"/><path d="M1203 48 L1203 57" fill="none" stroke="#3f8040" stroke-width="0.8" opacity="0.26"/><path d="M975 213 L986 213" fill="none" stroke="#3f8040" stroke-width="0.8" opacity="0.1873709007352525"/><path d="M1259 49 L1259 72" fill="none" stroke="#2f8a86" stroke-width="0.8" opacity="0.26"/><path d="M968 306 L968 377" fill="none" stroke="#3f8040" stroke-width="0.8" opacity="0.17553114808240125"/><path d="M1128 193 L1128 205" fill="none" stroke="#6a5530" stroke-width="0.8" opacity="0.26"/><path d="M1240 632 L1272 632" fill="none" stroke="#3f8040" stroke-width="0.8" opacity="0.26"/><path d="M1078 735 L1106 735" fill="none" stroke="#2f8a86" stroke-width="0.8" opacity="0.26"/><path d="M1114 320 L1114 361" fill="none" stroke="#2f8a86" stroke-width="0.8" opacity="0.26"/><path d="M1227 68 L1227 90" fill="none" stroke="#2f8a86" stroke-width="0.8" opacity="0.26"/><path d="M1269 225 L1269 279" fill="none" stroke="#3f8040" stroke-width="0.8" opacity="0.26"/><path d="M1229 260 L1229 321" fill="none" stroke="#3f8040" stroke-width="0.8" opacity="0.26"/><path d="M1245 429 L1245 468" fill="none" stroke="#2f8a86" stroke-width="0.8" opacity="0.26"/><path d="M975 27 L1037 27" fill="none" stroke="#3f8040" stroke-width="0.8" opacity="0.18666355530265485"/><path d="M977 101 L1001 101" fill="none" stroke="#6a5530" stroke-width="0.8" opacity="0.18966981149327927"/><path d="M1067 615 L1067 643" fill="none" stroke="#3f8040" stroke-width="0.8" opacity="0.26"/><path d="M1169 292 L1169 378" fill="none" stroke="#6a5530" stroke-width="0.8" opacity="0.26"/><path d="M1070 158 L1149 158" fill="none" stroke="#6a5530" stroke-width="0.8" opacity="0.26"/><path d="M1279 461 L1280 461" fill="none" stroke="#3f8040" stroke-width="0.8" opacity="0.26"/><path d="M1042 395 L1060 395" fill="none" stroke="#3f8040" stroke-width="0.8" opacity="0.26"/><path d="M917 659 L917 728" fill="none" stroke="#2f8a86" stroke-width="0.8" opacity="0.09195516565952694"/><path d="M1167 112 L1177 112" fill="none" stroke="#3f8040" stroke-width="0.8" opacity="0.26"/><path d="M1190 179 L1190 203" fill="none" stroke="#3f8040" stroke-width="0.8" opacity="0.26"/><path d="M1246 623 L1246 693" fill="none" stroke="#6a5530" stroke-width="0.8" opacity="0.26"/><path d="M1005 175 L1005 194" fill="none" stroke="#2f8a86" stroke-width="0.8" opacity="0.2348271509048424"/><path d="M1041 704 L1113 704" fill="none" stroke="#6a5530" stroke-width="0.8" opacity="0.26"/><path d="M951 284 L1024 284" fill="none" stroke="#3f8040" stroke-width="0.8" opacity="0.14715573250668595"/><path d="M890 545 L890 591" fill="none" stroke="#2f8a86" stroke-width="0.8" opacity="0.04892134322517585"/><path d="M1132 141 L1149 141" fill="none" stroke="#6a5530" stroke-width="0.8" opacity="0.26"/><path d="M896 31 L917 31" fill="none" stroke="#6a5530" stroke-width="0.8" opacity="0.05879370736353516"/><path d="M942 571 L996 571" fill="none" stroke="#6a5530" stroke-width="0.8" opacity="0.1340229549071364"/><path d="M971 385 L1022 385" fill="none" stroke="#2f8a86" stroke-width="0.8" opacity="0.18047572434401077"/><path d="M1110 724 L1127 724" fill="none" stroke="#3f8040" stroke-width="0.8" opacity="0.26"/><path d="M1230 453 L1280 453" fill="none" stroke="#6a5530" stroke-width="0.8" opacity="0.26"/><path d="M895 247 L967 247" fill="none" stroke="#3f8040" stroke-width="0.8" opacity="0.05663502085532561"/><path d="M914 538 L914 578" fill="none" stroke="#6a5530" stroke-width="0.8" opacity="0.08848894820514015"/><path d="M916 732 L959 732" fill="none" stroke="#3f8040" stroke-width="0.8" opacity="0.09095682976300838"/><path d="M1175 642 L1235 642" fill="none" stroke="#2f8a86" stroke-width="0.8" opacity="0.26"/><path d="M1151 159 L1151 223" fill="none" stroke="#6a5530" stroke-width="0.8" opacity="0.26"/><path d="M956 737 L956 774" fill="none" stroke="#3f8040" stroke-width="0.8" opacity="0.1555424532920071"/><path d="M945 604 L945 632" fill="none" stroke="#3f8040" stroke-width="0.8" opacity="0.1389025296279737"/><path d="M904 277 L946 277" fill="none" stroke="#6a5530" stroke-width="0.8" opacity="0.07109901695872227"/><path d="M935 531 L935 579" fill="none" stroke="#2f8a86" stroke-width="0.8" opacity="0.12167377135723531"/><path d="M977 399 L1021 399" fill="none" stroke="#3f8040" stroke-width="0.8" opacity="0.18961253139243933"/><path d="M933 548 L933 604" fill="none" stroke="#6a5530" stroke-width="0.8" opacity="0.11920938964967011"/><path d="M1206 424 L1277 424" fill="none" stroke="#6a5530" stroke-width="0.8" opacity="0.26"/><path d="M942 758 L1019 758" fill="none" stroke="#2f8a86" stroke-width="0.8" opacity="0.13311422392088273"/><path d="M926 224 L926 262" fill="none" stroke="#6a5530" stroke-width="0.8" opacity="0.10691086283761915"/><path d="M1238 235 L1238 252" fill="none" stroke="#3f8040" stroke-width="0.8" opacity="0.26"/><path d="M925 251 L925 298" fill="none" stroke="#3f8040" stroke-width="0.8" opacity="0.1059424203996191"/><path d="M1103 35 L1103 82" fill="none" stroke="#2f8a86" stroke-width="0.8" opacity="0.26"/><path d="M1167 759 L1221 759" fill="none" stroke="#3f8040" stroke-width="0.8" opacity="0.26"/><path d="M1263 378 L1263 450" fill="none" stroke="#3f8040" stroke-width="0.8" opacity="0.26"/><path d="M1248 499 L1280 499" fill="none" stroke="#3f8040" stroke-width="0.8" opacity="0.26"/><path d="M911 579 L921 579" fill="none" stroke="#2f8a86" stroke-width="0.8" opacity="0.08329412303957416"/><path d="M999 144 L999 204" fill="none" stroke="#6a5530" stroke-width="0.8" opacity="0.22510498388951308"/><path d="M1168 240 L1168 299" fill="none" stroke="#2f8a86" stroke-width="0.8" opacity="0.26"/><path d="M1210 248 L1248 248" fill="none" stroke="#3f8040" stroke-width="0.8" opacity="0.26"/><path d="M981 45 L998 45" fill="none" stroke="#2f8a86" stroke-width="0.8" opacity="0.19730746273396016"/><path d="M1258 383 L1280 383" fill="none" stroke="#6a5530" stroke-width="0.8" opacity="0.26"/><path d="M1121 485 L1121 505" fill="none" stroke="#6a5530" stroke-width="0.8" opacity="0.26"/><path d="M1057 751 L1073 751" fill="none" stroke="#3f8040" stroke-width="0.8" opacity="0.26"/><path d="M1072 169 L1110 169" fill="none" stroke="#3f8040" stroke-width="0.8" opacity="0.26"/><path d="M1222 609 L1222 652" fill="none" stroke="#3f8040" stroke-width="0.8" opacity="0.26"/><path d="M902 550 L902 631" fill="none" stroke="#3f8040" stroke-width="0.8" opacity="0.06844387236613222"/><path d="M1146 639 L1146 722" fill="none" stroke="#6a5530" stroke-width="0.8" opacity="0.26"/><path d="M882 622 L882 686" fill="none" stroke="#6a5530" stroke-width="0.8" opacity="0.03522580115535212"/><path d="M1097 400 L1140 400" fill="none" stroke="#6a5530" stroke-width="0.8" opacity="0.26"/><path d="M1265 480 L1280 480" fill="none" stroke="#3f8040" stroke-width="0.8" opacity="0.26"/><path d="M1013 510 L1067 510" fill="none" stroke="#2f8a86" stroke-width="0.8" opacity="0.24800215777715007"/><path d="M1072 501 L1105 501" fill="none" stroke="#3f8040" stroke-width="0.8" opacity="0.26"/><path d="M1133 656 L1160 656" fill="none" stroke="#2f8a86" stroke-width="0.8" opacity="0.26"/><path d="M939 448 L939 502" fill="none" stroke="#2f8a86" stroke-width="0.8" opacity="0.12799673631275738"/><path d="M976 342 L976 371" fill="none" stroke="#6a5530" stroke-width="0.8" opacity="0.18865493258185492"/><path d="M1236 424 L1253 424" fill="none" stroke="#3f8040" stroke-width="0.8" opacity="0.26"/><path d="M955 519 L1021 519" fill="none" stroke="#6a5530" stroke-width="0.8" opacity="0.15440104272219812"/><path d="M971 443 L988 443" fill="none" stroke="#3f8040" stroke-width="0.8" opacity="0.1797603537276188"/><path d="M1152 619 L1171 619" fill="none" stroke="#3f8040" stroke-width="0.8" opacity="0.26"/><path d="M1264 399 L1280 399" fill="none" stroke="#2f8a86" stroke-width="0.8" opacity="0.26"/><path d="M1267 148 L1267 195" fill="none" stroke="#3f8040" stroke-width="0.8" opacity="0.26"/><path d="M1190 45 L1190 72" fill="none" stroke="#3f8040" stroke-width="0.8" opacity="0.26"/><path d="M1161 740 L1206 740" fill="none" stroke="#3f8040" stroke-width="0.8" opacity="0.26"/><path d="M1050 688 L1109 688" fill="none" stroke="#6a5530" stroke-width="0.8" opacity="0.26"/><path d="M1247 674 L1269 674" fill="none" stroke="#3f8040" stroke-width="0.8" opacity="0.26"/><path d="M1174 9 L1174 38" fill="none" stroke="#6a5530" stroke-width="0.8" opacity="0.26"/><path d="M1175 734 L1242 734" fill="none" stroke="#3f8040" stroke-width="0.8" opacity="0.26"/><path d="M1021 275 L1021 310" fill="none" stroke="#3f8040" stroke-width="0.8" opacity="0.26"/><path d="M1244 188 L1244 225" fill="none" stroke="#2f8a86" stroke-width="0.8" opacity="0.26"/><path d="M1275 340 L1275 413" fill="none" stroke="#2f8a86" stroke-width="0.8" opacity="0.26"/><path d="M1200 143 L1254 143" fill="none" stroke="#3f8040" stroke-width="0.8" opacity="0.26"/><path d="M1148 647 L1204 647" fill="none" stroke="#3f8040" stroke-width="0.8" opacity="0.26"/><path d="M1156 626 L1156 711" fill="none" stroke="#3f8040" stroke-width="0.8" opacity="0.26"/><path d="M1278 377 L1280 377" fill="none" stroke="#3f8040" stroke-width="0.8" opacity="0.26"/><path d="M894 141 L969 141" fill="none" stroke="#2f8a86" stroke-width="0.8" opacity="0.05554826601216587"/><path d="M1267 536 L1280 536" fill="none" stroke="#6a5530" stroke-width="0.8" opacity="0.26"/><path d="M1124 59 L1124 94" fill="none" stroke="#6a5530" stroke-width="0.8" opacity="0.26"/><path d="M932 483 L958 483" fill="none" stroke="#3f8040" stroke-width="0.8" opacity="0.11759861329939339"/><path d="M1013 363 L1013 447" fill="none" stroke="#3f8040" stroke-width="0.8" opacity="0.2478899772098482"/><path d="M1112 258 L1121 258" fill="none" stroke="#2f8a86" stroke-width="0.8" opacity="0.26"/><path d="M1123 488 L1123 556" fill="none" stroke="#6a5530" stroke-width="0.8" opacity="0.26"/><path d="M989 387 L1019 387" fill="none" stroke="#6a5530" stroke-width="0.8" opacity="0.21016974226581983"/><path d="M894 434 L965 434" fill="none" stroke="#6a5530" stroke-width="0.8" opacity="0.054672527721417744"/><path d="M1133 491 L1171 491" fill="none" stroke="#3f8040" stroke-width="0.8" opacity="0.26"/><path d="M975 617 L975 636" fill="none" stroke="#3f8040" stroke-width="0.8" opacity="0.18722457570827583"/><path d="M1185 572 L1185 622" fill="none" stroke="#6a5530" stroke-width="0.8" opacity="0.26"/><path d="M1100 314 L1113 314" fill="none" stroke="#3f8040" stroke-width="0.8" opacity="0.26"/><path d="M1233 606 L1280 606" fill="none" stroke="#6a5530" stroke-width="0.8" opacity="0.26"/><path d="M1279 117 L1279 142" fill="none" stroke="#2f8a86" stroke-width="0.8" opacity="0.26"/><path d="M1038 598 L1038 682" fill="none" stroke="#3f8040" stroke-width="0.8" opacity="0.26"/><path d="M1168 195 L1168 250" fill="none" stroke="#3f8040" stroke-width="0.8" opacity="0.26"/><path d="M956 716 L1012 716" fill="none" stroke="#3f8040" stroke-width="0.8" opacity="0.15615417427699138"/><path d="M1275 276 L1280 276" fill="none" stroke="#2f8a86" stroke-width="0.8" opacity="0.26"/><path d="M1249 649 L1249 683" fill="none" stroke="#6a5530" stroke-width="0.8" opacity="0.26"/><path d="M983 18 L983 39" fill="none" stroke="#3f8040" stroke-width="0.8" opacity="0.19990050543259952"/><path d="M888 37 L933 37" fill="none" stroke="#3f8040" stroke-width="0.8" opacity="0.04554259145188526"/><path d="M1139 152 L1207 152" fill="none" stroke="#6a5530" stroke-width="0.8" opacity="0.26"/><path d="M912 627 L992 627" fill="none" stroke="#3f8040" stroke-width="0.8" opacity="0.08405045909985219"/><path d="M882 209 L943 209" fill="none" stroke="#3f8040" stroke-width="0.8" opacity="0.03578255647655593"/><path d="M1249 164 L1280 164" fill="none" stroke="#3f8040" stroke-width="0.8" opacity="0.26"/><path d="M1042 526 L1078 526" fill="none" stroke="#3f8040" stroke-width="0.8" opacity="0.26"/><path d="M1199 67 L1257 67" fill="none" stroke="#2f8a86" stroke-width="0.8" opacity="0.26"/><path d="M1040 728 L1119 728" fill="none" stroke="#3f8040" stroke-width="0.8" opacity="0.26"/><path d="M1106 764 L1106 774" fill="none" stroke="#3f8040" stroke-width="0.8" opacity="0.26"/><path d="M887 163 L887 214" fill="none" stroke="#3f8040" stroke-width="0.8" opacity="0.04459087372961986"/><path d="M1025 266 L1088 266" fill="none" stroke="#6a5530" stroke-width="0.8" opacity="0.26"/><path d="M1121 256 L1189 256" fill="none" stroke="#3f8040" stroke-width="0.8" opacity="0.26"/><path d="M1071 24 L1132 24" fill="none" stroke="#2f8a86" stroke-width="0.8" opacity="0.26"/><path d="M1025 410 L1025 440" fill="none" stroke="#3f8040" stroke-width="0.8" opacity="0.26"/><path d="M1070 507 L1070 579" fill="none" stroke="#3f8040" stroke-width="0.8" opacity="0.26"/><path d="M1132 310 L1220 310" fill="none" stroke="#3f8040" stroke-width="0.8" opacity="0.26"/><path d="M929 420 L929 445" fill="none" stroke="#6a5530" stroke-width="0.8" opacity="0.11194456591537658"/><path d="M1122 571 L1204 571" fill="none" stroke="#6a5530" stroke-width="0.8" opacity="0.26"/><path d="M1020 549 L1020 593" fill="none" stroke="#2f8a86" stroke-width="0.8" opacity="0.26"/><path d="M1245 697 L1245 737" fill="none" stroke="#6a5530" stroke-width="0.8" opacity="0.26"/><path d="M1241 83 L1280 83" fill="none" stroke="#3f8040" stroke-width="0.8" opacity="0.26"/><path d="M1245 522 L1280 522" fill="none" stroke="#6a5530" stroke-width="0.8" opacity="0.26"/><path d="M1044 711 L1044 774" fill="none" stroke="#6a5530" stroke-width="0.8" opacity="0.26"/><path d="M888 549 L888 577" fill="none" stroke="#3f8040" stroke-width="0.8" opacity="0.04599738628051065"/><path d="M1184 497 L1184 530" fill="none" stroke="#2f8a86" stroke-width="0.8" opacity="0.26"/><path d="M1108 121 L1187 121" fill="none" stroke="#3f8040" stroke-width="0.8" opacity="0.26"/><path d="M935 232 L935 248" fill="none" stroke="#3f8040" stroke-width="0.8" opacity="0.1212410442146611"/><path d="M1236 125 L1236 189" fill="none" stroke="#2f8a86" stroke-width="0.8" opacity="0.26"/><path d="M901 605 L901 683" fill="none" stroke="#3f8040" stroke-width="0.8" opacity="0.06638312812043506"/><path d="M1190 340 L1233 340" fill="none" stroke="#6a5530" stroke-width="0.8" opacity="0.26"/><path d="M999 19 L999 36" fill="none" stroke="#3f8040" stroke-width="0.8" opacity="0.22594177168123555"/><path d="M1001 389 L1001 426" fill="none" stroke="#6a5530" stroke-width="0.8" opacity="0.22926054453865904"/><path d="M1039 321 L1100 321" fill="none" stroke="#2f8a86" stroke-width="0.8" opacity="0.26"/><path d="M1272 25 L1272 53" fill="none" stroke="#3f8040" stroke-width="0.8" opacity="0.26"/><path d="M1082 179 L1125 179" fill="none" stroke="#3f8040" stroke-width="0.8" opacity="0.26"/><path d="M899 692 L899 705" fill="none" stroke="#3f8040" stroke-width="0.8" opacity="0.06390712524955457"/><path d="M1075 105 L1075 148" fill="none" stroke="#6a5530" stroke-width="0.8" opacity="0.26"/><path d="M1096 490 L1149 490" fill="none" stroke="#3f8040" stroke-width="0.8" opacity="0.26"/><path d="M1216 741 L1230 741" fill="none" stroke="#6a5530" stroke-width="0.8" opacity="0.26"/><path d="M1269 173 L1269 187" fill="none" stroke="#6a5530" stroke-width="0.8" opacity="0.26"/><path d="M988 748 L988 772" fill="none" stroke="#3f8040" stroke-width="0.8" opacity="0.20735248070060114"/><path d="M1103 281 L1112 281" fill="none" stroke="#3f8040" stroke-width="0.8" opacity="0.26"/><path d="M1098 425 L1098 489" fill="none" stroke="#3f8040" stroke-width="0.8" opacity="0.26"/><path d="M1007 324 L1095 324" fill="none" stroke="#2f8a86" stroke-width="0.8" opacity="0.23937242113797286"/><path d="M1233 622 L1233 704" fill="none" stroke="#3f8040" stroke-width="0.8" opacity="0.26"/><path d="M1080 765 L1145 765" fill="none" stroke="#2f8a86" stroke-width="0.8" opacity="0.26"/><path d="M1210 513 L1225 513" fill="none" stroke="#3f8040" stroke-width="0.8" opacity="0.26"/><path d="M900 537 L934 537" fill="none" stroke="#2f8a86" stroke-width="0.8" opacity="0.06468151788251537"/><path d="M1006 752 L1014 752" fill="none" stroke="#2f8a86" stroke-width="0.8" opacity="0.23765052598767805"/><path d="M1117 770 L1117 774" fill="none" stroke="#2f8a86" stroke-width="0.8" opacity="0.26"/><path d="M906 755 L906 774" fill="none" stroke="#3f8040" stroke-width="0.8" opacity="0.07417666663073386"/><path d="M1199 514 L1199 598" fill="none" stroke="#3f8040" stroke-width="0.8" opacity="0.26"/><path d="M1216 664 L1253 664" fill="none" stroke="#2f8a86" stroke-width="0.8" opacity="0.26"/><path d="M1280 51 L1280 51" fill="none" stroke="#3f8040" stroke-width="0.8" opacity="0.26"/><path d="M1091 630 L1091 657" fill="none" stroke="#6a5530" stroke-width="0.8" opacity="0.26"/><path d="M1145 138 L1145 223" fill="none" stroke="#3f8040" stroke-width="0.8" opacity="0.26"/><path d="M1025 668 L1025 712" fill="none" stroke="#2f8a86" stroke-width="0.8" opacity="0.26"/><path d="M981 80 L981 117" fill="none" stroke="#3f8040" stroke-width="0.8" opacity="0.19596317264322538"/><path d="M915 306 L915 396" fill="none" stroke="#3f8040" stroke-width="0.8" opacity="0.08970017536549905"/><path d="M1071 618 L1071 688" fill="none" stroke="#6a5530" stroke-width="0.8" opacity="0.26"/><path d="M932 378 L994 378" fill="none" stroke="#3f8040" stroke-width="0.8" opacity="0.11733959576861211"/><path d="M1201 196 L1254 196" fill="none" stroke="#3f8040" stroke-width="0.8" opacity="0.26"/><path d="M903 138 L970 138" fill="none" stroke="#3f8040" stroke-width="0.8" opacity="0.07002753238293831"/><path d="M982 205 L1026 205" fill="none" stroke="#2f8a86" stroke-width="0.8" opacity="0.19865381655984024"/><path d="M961 328 L1034 328" fill="none" stroke="#3f8040" stroke-width="0.8" opacity="0.16359391170289597"/><path d="M1167 291 L1178 291" fill="none" stroke="#3f8040" stroke-width="0.8" opacity="0.26"/><path d="M1052 470 L1052 499" fill="none" stroke="#6a5530" stroke-width="0.8" opacity="0.26"/><path d="M1111 716 L1111 740" fill="none" stroke="#3f8040" stroke-width="0.8" opacity="0.26"/><path d="M961 666 L961 680" fill="none" stroke="#2f8a86" stroke-width="0.8" opacity="0.16453390064941997"/><path d="M1090 384 L1090 466" fill="none" stroke="#3f8040" stroke-width="0.8" opacity="0.26"/><path d="M1105 724 L1105 774" fill="none" stroke="#2f8a86" stroke-width="0.8" opacity="0.26"/><path d="M1069 689 L1069 733" fill="none" stroke="#2f8a86" stroke-width="0.8" opacity="0.26"/><path d="M1181 7 L1181 34" fill="none" stroke="#6a5530" stroke-width="0.8" opacity="0.26"/><path d="M896 526 L950 526" fill="none" stroke="#2f8a86" stroke-width="0.8" opacity="0.058882179571360556"/><path d="M927 171 L927 185" fill="none" stroke="#3f8040" stroke-width="0.8" opacity="0.10927747725348042"/><path d="M915 583 L970 583" fill="none" stroke="#3f8040" stroke-width="0.8" opacity="0.08986266152039112"/><path d="M960 260 L1039 260" fill="none" stroke="#2f8a86" stroke-width="0.8" opacity="0.16239352019271866"/><path d="M936 315 L936 327" fill="none" stroke="#6a5530" stroke-width="0.8" opacity="0.12364289431841291"/><path d="M956 760 L979 760" fill="none" stroke="#3f8040" stroke-width="0.8" opacity="0.15616276522608435"/><path d="M915 297 L977 297" fill="none" stroke="#3f8040" stroke-width="0.8" opacity="0.08879941972700024"/><path d="M1084 325 L1084 337" fill="none" stroke="#3f8040" stroke-width="0.8" opacity="0.26"/><path d="M1032 338 L1032 390" fill="none" stroke="#3f8040" stroke-width="0.8" opacity="0.26"/><path d="M901 416 L939 416" fill="none" stroke="#2f8a86" stroke-width="0.8" opacity="0.06636969555079224"/><path d="M1164 109 L1164 194" fill="none" stroke="#3f8040" stroke-width="0.8" opacity="0.26"/><path d="M1248 430 L1248 443" fill="none" stroke="#3f8040" stroke-width="0.8" opacity="0.26"/><path d="M907 736 L907 774" fill="none" stroke="#3f8040" stroke-width="0.8" opacity="0.07646740582439"/><path d="M1198 226 L1198 292" fill="none" stroke="#2f8a86" stroke-width="0.8" opacity="0.26"/><path d="M1171 158 L1171 182" fill="none" stroke="#6a5530" stroke-width="0.8" opacity="0.26"/><path d="M1136 38 L1214 38" fill="none" stroke="#3f8040" stroke-width="0.8" opacity="0.26"/><path d="M1079 11 L1079 78" fill="none" stroke="#6a5530" stroke-width="0.8" opacity="0.26"/><path d="M1150 522 L1182 522" fill="none" stroke="#6a5530" stroke-width="0.8" opacity="0.26"/><path d="M944 602 L944 668" fill="none" stroke="#3f8040" stroke-width="0.8" opacity="0.1358208235707437"/><path d="M961 71 L973 71" fill="none" stroke="#6a5530" stroke-width="0.8" opacity="0.163557757957013"/><path d="M983 701 L1047 701" fill="none" stroke="#6a5530" stroke-width="0.8" opacity="0.19993339418647002"/><path d="M1250 103 L1250 124" fill="none" stroke="#2f8a86" stroke-width="0.8" opacity="0.26"/><path d="M973 451 L973 485" fill="none" stroke="#6a5530" stroke-width="0.8" opacity="0.1837339265537832"/><rect x="983" y="425" width="7" height="15" fill="none" stroke="#3f8040" stroke-width=".8" opacity="0.19"/><rect x="1037" y="25" width="9" height="12" fill="none" stroke="#3f8040" stroke-width=".8" opacity="0.25"/><rect x="1142" y="537" width="7" height="7" fill="none" stroke="#3f8040" stroke-width=".8" opacity="0.25"/><rect x="1052" y="525" width="6" height="14" fill="none" stroke="#3f8040" stroke-width=".8" opacity="0.25"/><rect x="1143" y="163" width="12" height="11" fill="none" stroke="#3f8040" stroke-width=".8" opacity="0.25"/><rect x="996" y="269" width="13" height="10" fill="none" stroke="#3f8040" stroke-width=".8" opacity="0.21"/><rect x="960" y="217" width="8" height="11" fill="none" stroke="#3f8040" stroke-width=".8" opacity="0.16"/><rect x="961" y="364" width="13" height="13" fill="none" stroke="#3f8040" stroke-width=".8" opacity="0.16"/><rect x="1112" y="232" width="11" height="6" fill="none" stroke="#3f8040" stroke-width=".8" opacity="0.25"/><rect x="1018" y="731" width="12" height="6" fill="none" stroke="#6a5530" stroke-width=".8" opacity="0.25"/><rect x="1020" y="372" width="9" height="9" fill="none" stroke="#3f8040" stroke-width=".8" opacity="0.25"/><rect x="1195" y="231" width="6" height="11" fill="none" stroke="#3f8040" stroke-width=".8" opacity="0.25"/><rect x="1179" y="87" width="7" height="9" fill="none" stroke="#3f8040" stroke-width=".8" opacity="0.25"/><rect x="893" y="397" width="6" height="12" fill="none" stroke="#3f8040" stroke-width=".8" opacity="0.05"/><rect x="1046" y="648" width="6" height="13" fill="none" stroke="#3f8040" stroke-width=".8" opacity="0.25"/><rect x="1024" y="513" width="6" height="5" fill="none" stroke="#6a5530" stroke-width=".8" opacity="0.25"/><rect x="1001" y="202" width="6" height="8" fill="none" stroke="#3f8040" stroke-width=".8" opacity="0.22"/><rect x="1078" y="415" width="6" height="10" fill="none" stroke="#3f8040" stroke-width=".8" opacity="0.25"/><rect x="1107" y="33" width="8" height="15" fill="none" stroke="#6a5530" stroke-width=".8" opacity="0.25"/><rect x="1041" y="157" width="6" height="8" fill="none" stroke="#3f8040" stroke-width=".8" opacity="0.25"/><rect x="1236" y="12" width="15" height="10" fill="none" stroke="#3f8040" stroke-width=".8" opacity="0.25"/><rect x="1156" y="177" width="13" height="7" fill="none" stroke="#6a5530" stroke-width=".8" opacity="0.25"/><rect x="1279" y="328" width="12" height="6" fill="none" stroke="#3f8040" stroke-width=".8" opacity="0.25"/><rect x="914" y="448" width="8" height="12" fill="none" stroke="#3f8040" stroke-width=".8" opacity="0.08"/><rect x="1209" y="57" width="9" height="6" fill="none" stroke="#3f8040" stroke-width=".8" opacity="0.25"/><rect x="1127" y="535" width="14" height="9" fill="none" stroke="#6a5530" stroke-width=".8" opacity="0.25"/><rect x="1117" y="141" width="8" height="15" fill="none" stroke="#6a5530" stroke-width=".8" opacity="0.25"/><rect x="893" y="610" width="7" height="11" fill="none" stroke="#3f8040" stroke-width=".8" opacity="0.05"/><rect x="940" y="267" width="7" height="7" fill="none" stroke="#3f8040" stroke-width=".8" opacity="0.13"/><rect x="1154" y="548" width="6" height="5" fill="none" stroke="#6a5530" stroke-width=".8" opacity="0.25"/><rect x="895" y="407" width="9" height="6" fill="none" stroke="#3f8040" stroke-width=".8" opacity="0.05"/><rect x="960" y="484" width="14" height="14" fill="none" stroke="#3f8040" stroke-width=".8" opacity="0.16"/><rect x="1140" y="752" width="11" height="14" fill="none" stroke="#6a5530" stroke-width=".8" opacity="0.25"/><rect x="1149" y="577" width="6" height="14" fill="none" stroke="#6a5530" stroke-width=".8" opacity="0.25"/><rect x="1242" y="577" width="14" height="14" fill="none" stroke="#3f8040" stroke-width=".8" opacity="0.25"/><rect x="1054" y="639" width="14" height="15" fill="none" stroke="#6a5530" stroke-width=".8" opacity="0.25"/><rect x="1179" y="459" width="12" height="12" fill="none" stroke="#3f8040" stroke-width=".8" opacity="0.25"/><rect x="1267" y="610" width="8" height="14" fill="none" stroke="#3f8040" stroke-width=".8" opacity="0.25"/><rect x="976" y="455" width="11" height="15" fill="none" stroke="#3f8040" stroke-width=".8" opacity="0.18"/><rect x="1037" y="607" width="14" height="13" fill="none" stroke="#6a5530" stroke-width=".8" opacity="0.25"/><rect x="1210" y="314" width="6" height="12" fill="none" stroke="#6a5530" stroke-width=".8" opacity="0.25"/><rect x="1145" y="700" width="10" height="8" fill="none" stroke="#6a5530" stroke-width=".8" opacity="0.25"/><rect x="1076" y="13" width="6" height="14" fill="none" stroke="#6a5530" stroke-width=".8" opacity="0.25"/><rect x="1044" y="232" width="7" height="11" fill="none" stroke="#3f8040" stroke-width=".8" opacity="0.25"/><rect x="1021" y="654" width="12" height="8" fill="none" stroke="#3f8040" stroke-width=".8" opacity="0.25"/><rect x="1277" y="145" width="15" height="9" fill="none" stroke="#3f8040" stroke-width=".8" opacity="0.25"/><rect x="928" y="529" width="5" height="14" fill="none" stroke="#3f8040" stroke-width=".8" opacity="0.11"/><rect x="1036" y="257" width="7" height="7" fill="none" stroke="#6a5530" stroke-width=".8" opacity="0.25"/><rect x="1236" y="472" width="15" height="9" fill="none" stroke="#6a5530" stroke-width=".8" opacity="0.25"/><rect x="1007" y="678" width="14" height="12" fill="none" stroke="#3f8040" stroke-width=".8" opacity="0.23"/><rect x="1036" y="7" width="14" height="6" fill="none" stroke="#3f8040" stroke-width=".8" opacity="0.25"/><rect x="1062" y="626" width="8" height="9" fill="none" stroke="#3f8040" stroke-width=".8" opacity="0.25"/><rect x="1274" y="569" width="13" height="12" fill="none" stroke="#3f8040" stroke-width=".8" opacity="0.25"/><rect x="1251" y="692" width="12" height="6" fill="none" stroke="#6a5530" stroke-width=".8" opacity="0.25"/><rect x="1058" y="741" width="9" height="12" fill="none" stroke="#6a5530" stroke-width=".8" opacity="0.25"/><rect x="1255" y="626" width="6" height="12" fill="none" stroke="#6a5530" stroke-width=".8" opacity="0.25"/><rect x="1025" y="756" width="6" height="14" fill="none" stroke="#3f8040" stroke-width=".8" opacity="0.25"/><rect x="1103" y="347" width="13" height="15" fill="none" stroke="#6a5530" stroke-width=".8" opacity="0.25"/><rect x="894" y="252" width="7" height="15" fill="none" stroke="#6a5530" stroke-width=".8" opacity="0.05"/><rect x="938" y="455" width="11" height="6" fill="none" stroke="#6a5530" stroke-width=".8" opacity="0.12"/><rect x="949" y="456" width="16" height="12" fill="none" stroke="#3f8040" stroke-width=".8" opacity="0.14"/><rect x="996" y="421" width="10" height="16" fill="none" stroke="#3f8040" stroke-width=".8" opacity="0.21"/><rect x="1202" y="524" width="9" height="16" fill="none" stroke="#6a5530" stroke-width=".8" opacity="0.25"/><rect x="1156" y="215" width="7" height="11" fill="none" stroke="#3f8040" stroke-width=".8" opacity="0.25"/><rect x="1197" y="269" width="7" height="11" fill="none" stroke="#3f8040" stroke-width=".8" opacity="0.25"/><rect x="945" y="571" width="7" height="8" fill="none" stroke="#3f8040" stroke-width=".8" opacity="0.13"/><rect x="1115" y="752" width="14" height="9" fill="none" stroke="#3f8040" stroke-width=".8" opacity="0.25"/><rect x="989" y="690" width="10" height="12" fill="none" stroke="#6a5530" stroke-width=".8" opacity="0.20"/><rect x="1041" y="528" width="9" height="9" fill="none" stroke="#6a5530" stroke-width=".8" opacity="0.25"/><rect x="987" y="158" width="15" height="10" fill="none" stroke="#6a5530" stroke-width=".8" opacity="0.20"/><rect x="1135" y="603" width="8" height="7" fill="none" stroke="#6a5530" stroke-width=".8" opacity="0.25"/><rect x="1145" y="656" width="10" height="6" fill="none" stroke="#6a5530" stroke-width=".8" opacity="0.25"/><rect x="1025" y="710" width="11" height="8" fill="none" stroke="#3f8040" stroke-width=".8" opacity="0.25"/><rect x="984" y="597" width="5" height="14" fill="none" stroke="#6a5530" stroke-width=".8" opacity="0.19"/><rect x="1021" y="728" width="8" height="8" fill="none" stroke="#3f8040" stroke-width=".8" opacity="0.25"/><rect x="1230" y="75" width="12" height="14" fill="none" stroke="#3f8040" stroke-width=".8" opacity="0.25"/><rect x="1252" y="128" width="7" height="13" fill="none" stroke="#3f8040" stroke-width=".8" opacity="0.25"/><rect x="1190" y="305" width="15" height="13" fill="none" stroke="#6a5530" stroke-width=".8" opacity="0.25"/><rect x="1040" y="387" width="9" height="15" fill="none" stroke="#3f8040" stroke-width=".8" opacity="0.25"/><rect x="1093" y="403" width="12" height="15" fill="none" stroke="#3f8040" stroke-width=".8" opacity="0.25"/><rect x="965" y="528" width="15" height="6" fill="none" stroke="#3f8040" stroke-width=".8" opacity="0.16"/><rect x="1221" y="517" width="11" height="9" fill="none" stroke="#6a5530" stroke-width=".8" opacity="0.25"/><rect x="1194" y="526" width="14" height="6" fill="none" stroke="#3f8040" stroke-width=".8" opacity="0.25"/><rect x="1149" y="584" width="11" height="15" fill="none" stroke="#3f8040" stroke-width=".8" opacity="0.25"/><rect x="1177" y="635" width="12" height="15" fill="none" stroke="#3f8040" stroke-width=".8" opacity="0.25"/><rect x="1139" y="678" width="9" height="15" fill="none" stroke="#3f8040" stroke-width=".8" opacity="0.25"/><rect x="1189" y="468" width="11" height="12" fill="none" stroke="#3f8040" stroke-width=".8" opacity="0.25"/><rect x="1004" y="278" width="11" height="15" fill="none" stroke="#3f8040" stroke-width=".8" opacity="0.22"/><rect x="1024" y="541" width="6" height="14" fill="none" stroke="#6a5530" stroke-width=".8" opacity="0.25"/><rect x="967" y="354" width="13" height="10" fill="none" stroke="#3f8040" stroke-width=".8" opacity="0.17"/><rect x="1271" y="457" width="12" height="5" fill="none" stroke="#6a5530" stroke-width=".8" opacity="0.25"/><rect x="924" y="174" width="12" height="9" fill="none" stroke="#6a5530" stroke-width=".8" opacity="0.10"/><rect x="1092" y="178" width="11" height="14" fill="none" stroke="#6a5530" stroke-width=".8" opacity="0.25"/><rect x="1216" y="626" width="11" height="5" fill="none" stroke="#3f8040" stroke-width=".8" opacity="0.25"/><rect x="891" y="391" width="10" height="6" fill="none" stroke="#6a5530" stroke-width=".8" opacity="0.05"/><rect x="1170" y="453" width="9" height="11" fill="none" stroke="#6a5530" stroke-width=".8" opacity="0.25"/><rect x="971" y="672" width="16" height="14" fill="none" stroke="#6a5530" stroke-width=".8" opacity="0.17"/><rect x="1143" y="195" width="12" height="11" fill="none" stroke="#6a5530" stroke-width=".8" opacity="0.25"/><rect x="1062" y="528" width="13" height="10" fill="none" stroke="#6a5530" stroke-width=".8" opacity="0.25"/><rect x="1126" y="87" width="7" height="13" fill="none" stroke="#3f8040" stroke-width=".8" opacity="0.25"/><rect x="1174" y="400" width="10" height="7" fill="none" stroke="#3f8040" stroke-width=".8" opacity="0.25"/><rect x="1189" y="156" width="13" height="14" fill="none" stroke="#6a5530" stroke-width=".8" opacity="0.25"/><rect x="1179" y="734" width="15" height="13" fill="none" stroke="#3f8040" stroke-width=".8" opacity="0.25"/><rect x="905" y="159" width="5" height="14" fill="none" stroke="#6a5530" stroke-width=".8" opacity="0.07"/><rect x="1103" y="486" width="11" height="8" fill="none" stroke="#6a5530" stroke-width=".8" opacity="0.25"/><rect x="1002" y="34" width="7" height="9" fill="none" stroke="#3f8040" stroke-width=".8" opacity="0.22"/><rect x="1202" y="352" width="6" height="6" fill="none" stroke="#3f8040" stroke-width=".8" opacity="0.25"/><rect x="1026" y="684" width="10" height="6" fill="none" stroke="#6a5530" stroke-width=".8" opacity="0.25"/><rect x="1198" y="369" width="14" height="6" fill="none" stroke="#3f8040" stroke-width=".8" opacity="0.25"/><rect x="1091" y="194" width="9" height="9" fill="none" stroke="#3f8040" stroke-width=".8" opacity="0.25"/><path d="M1121.3 156.0 A200.0 200.0 0 0 1 956.8 -23.6" fill="none" stroke="#3f8040" stroke-width="0.7" opacity="0.1"/><path d="M1116.8 181.6 A226.0 226.0 0 0 1 930.9 -21.3" fill="none" stroke="#3f8040" stroke-width="0.7" opacity="0.1"/><path d="M1112.2 207.2 A252.0 252.0 0 0 1 905.0 -19.0" fill="none" stroke="#3f8040" stroke-width="0.7" opacity="0.1"/><path d="M1107.7 232.8 A278.0 278.0 0 0 1 879.1 -16.8" fill="none" stroke="#3f8040" stroke-width="0.7" opacity="0.1"/><path d="M1103.2 258.4 A304.0 304.0 0 0 1 853.2 -14.5" fill="none" stroke="#3f8040" stroke-width="0.7" opacity="0.1"/><path d="M1098.7 284.0 A330.0 330.0 0 0 1 827.3 -12.2" fill="none" stroke="#3f8040" stroke-width="0.7" opacity="0.1"/><path d="M1094.2 309.6 A356.0 356.0 0 0 1 801.4 -10.0" fill="none" stroke="#3f8040" stroke-width="0.7" opacity="0.1"/><path d="M1089.7 335.2 A382.0 382.0 0 0 1 775.5 -7.7" fill="none" stroke="#3f8040" stroke-width="0.7" opacity="0.1"/><path d="M1085.2 360.8 A408.0 408.0 0 0 1 749.6 -5.4" fill="none" stroke="#3f8040" stroke-width="0.7" opacity="0.1"/><path d="M1080.6 386.4 A434.0 434.0 0 0 1 723.7 -3.2" fill="none" stroke="#3f8040" stroke-width="0.7" opacity="0.1"/><path d="M1076.1 412.0 A460.0 460.0 0 0 1 697.8 -0.9" fill="none" stroke="#3f8040" stroke-width="0.7" opacity="0.1"/><path d="M1071.6 437.6 A486.0 486.0 0 0 1 671.8 1.4" fill="none" stroke="#3f8040" stroke-width="0.7" opacity="0.1"/><path d="M1067.1 463.2 A512.0 512.0 0 0 1 645.9 3.6" fill="none" stroke="#3f8040" stroke-width="0.7" opacity="0.1"/><defs><pattern id="hatch" width="2.5" height="2.5" patternUnits="userSpaceOnUse" patternTransform="rotate(35)"><rect width="2.5" height=".9" fill="#5aa24c"/></pattern><pattern id="hatch2" width="4" height="4" patternUnits="userSpaceOnUse" patternTransform="rotate(-50)"><rect width="4" height=".8" fill="#5aa24c"/></pattern></defs><path d="M998.2 0 A163 163 0 0 0 1125 119 L1125 50 A119 119 0 0 1 1028 0 Z" fill="url(#hatch)" opacity=".45"/><path d="M998.2 0 A163 163 0 0 0 1125 119 L1125 50 A119 119 0 0 1 1028 0 Z" fill="url(#hatch2)" opacity=".35"/><path d="M998.2 0 A163 163 0 0 0 1125 119 L1125 50 A119 119 0 0 1 1028 0 Z" fill="#58a04a" opacity=".10"/><path d="M1150.8 110.0 A155.7 155.7 0 0 1 998.6 -13.3" fill="none" stroke="#58a04a" stroke-width="0.8" opacity="0.35"/><path d="M1145.7 98.0 A148.3 148.3 0 0 1 1000.6 -19.5" fill="none" stroke="#58a04a" stroke-width="0.8" opacity="0.35"/><path d="M1140.5 86.0 A141.0 141.0 0 0 1 1002.6 -25.7" fill="none" stroke="#58a04a" stroke-width="0.8" opacity="0.35"/><path d="M1135.3 74.0 A133.7 133.7 0 0 1 1004.6 -31.9" fill="none" stroke="#58a04a" stroke-width="0.8" opacity="0.35"/><path d="M1130.2 62.0 A126.3 126.3 0 0 1 1006.6 -38.1" fill="none" stroke="#58a04a" stroke-width="0.8" opacity="0.35"/><path d="M1161.7 121.9 A163.0 163.0 0 0 1 995.5 -12.7" fill="none" stroke="#58a04a" stroke-width="1.7" opacity="0.6"/><path d="M1184.5 34.1 A119.0 119.0 0 0 1 1026.3 -2.5" fill="none" stroke="#58a04a" stroke-width="1.2" opacity="0.5"/><path d="M1195.9 -81.5 A72.0 72.0 0 0 1 1122.5 3.0" fill="none" stroke="#58a04a" stroke-width="0.8" opacity="0.38"/><path d="M1203.8 -82.9 A80.0 80.0 0 0 1 1122.2 11.0" fill="none" stroke="#58a04a" stroke-width="0.8" opacity="0.38"/><path d="M1211.7 -84.3 A88.0 88.0 0 0 1 1121.9 18.9" fill="none" stroke="#58a04a" stroke-width="0.8" opacity="0.38"/><path d="M1219.5 -85.7 A96.0 96.0 0 0 1 1121.6 26.9" fill="none" stroke="#58a04a" stroke-width="0.8" opacity="0.38"/><path d="M1227.4 -87.1 A104.0 104.0 0 0 1 1121.4 34.9" fill="none" stroke="#58a04a" stroke-width="0.8" opacity="0.38"/><path d="M1235.3 -88.4 A112.0 112.0 0 0 1 1121.1 42.9" fill="none" stroke="#58a04a" stroke-width="0.8" opacity="0.38"/><path d="M1287.7 -31.3 A190.0 190.0 0 0 1 1140.0 97.1" fill="none" stroke="#58a04a" stroke-width="1.7" opacity="0.55"/><path d="M1177 87 L1280 205" fill="none" stroke="#58a04a" stroke-width="1.3" opacity="0.45"/><path d="M1125 0 L1125 200" fill="none" stroke="#58a04a" stroke-width="1.2" opacity="0.35"/><path d="M1119.6 118.3 A216.0 216.0 0 0 1 1244.4 353.1" fill="none" stroke="#58a04a" stroke-width="1.6" opacity="0.5"/><path d="M1142.7 123.3 A222.0 222.0 0 0 1 1240.3 239.7" fill="none" stroke="#58a04a" stroke-width="0.8" opacity="0.3"/><path d="M1034.6 367.9 A300.0 300.0 0 0 1 1227.4 138.1" fill="none" stroke="#58a04a" stroke-width="1.5" opacity="0.5"/><path d="M1040.2 342.4 A300.0 300.0 0 0 1 1107.1 219.3" fill="none" stroke="#58a04a" stroke-width="0.6" opacity="0.3"/><path d="M1045.1 343.6 A295.0 295.0 0 0 1 1110.8 222.6" fill="none" stroke="#58a04a" stroke-width="0.6" opacity="0.3"/><path d="M1049.9 344.9 A290.0 290.0 0 0 1 1114.5 226.0" fill="none" stroke="#58a04a" stroke-width="0.6" opacity="0.3"/><path d="M1054.7 346.2 A285.0 285.0 0 0 1 1118.2 229.3" fill="none" stroke="#58a04a" stroke-width="0.6" opacity="0.3"/><path d="M1059.5 347.5 A280.0 280.0 0 0 1 1121.9 232.6" fill="none" stroke="#58a04a" stroke-width="0.6" opacity="0.3"/><path d="M1064.4 348.8 A275.0 275.0 0 0 1 1125.6 236.0" fill="none" stroke="#58a04a" stroke-width="0.6" opacity="0.3"/><path d="M1069.2 350.1 A270.0 270.0 0 0 1 1129.4 239.3" fill="none" stroke="#58a04a" stroke-width="0.6" opacity="0.3"/><path d="M1056 0 L1056 380" fill="none" stroke="#6a5530" stroke-width="1.5" opacity="0.45"/><path d="M1124 0 L1124 380" fill="none" stroke="#6a5530" stroke-width="2.5" opacity="0.55"/><path d="M1226 0 L1226 380" fill="none" stroke="#6a5530" stroke-width="2.2" opacity="0.5"/><path d="M1122 480 L1122 690" fill="none" stroke="#6a5530" stroke-width="2.5" opacity="0.5"/><path d="M1221 480 L1221 690" fill="none" stroke="#6a5530" stroke-width="2.5" opacity="0.5"/><path d="M1019 380 L1019 690" fill="none" stroke="#6a5530" stroke-width="2.2" opacity="0.5"/><path d="M1180 390 L1180 690" fill="none" stroke="#6a5530" stroke-width="1" opacity="0.3"/><path d="M1266 300 L1266 690" fill="none" stroke="#6a5530" stroke-width="1.2" opacity="0.35"/><path d="M1074 380 L1074 545" fill="none" stroke="#6a5530" stroke-width="1.4" opacity="0.45"/><path d="M930 0 L930 95" fill="none" stroke="#6a5530" stroke-width="0.8" opacity="0.25"/><path d="M885 0 L885 95" fill="none" stroke="#6a5530" stroke-width="0.8" opacity="0.25"/><path d="M1019 690 L1019 774" fill="none" stroke="#6a5530" stroke-width="0.8" opacity="0.2"/><path d="M1122 690 L1122 774" fill="none" stroke="#6a5530" stroke-width="0.8" opacity="0.2"/><path d="M1221 690 L1221 774" fill="none" stroke="#6a5530" stroke-width="0.8" opacity="0.2"/><path d="M1125 80 L1222 80" fill="none" stroke="#6a5530" stroke-width="2.2" opacity="0.5"/><path d="M1085 182 L1190 182" fill="none" stroke="#6a5530" stroke-width="2" opacity="0.45"/><path d="M1010 265 L1130 265" fill="none" stroke="#6a5530" stroke-width="1.5" opacity="0.35"/><path d="M1010 410 L1265 410" fill="none" stroke="#58a04a" stroke-width="2" opacity="0.45"/><path d="M1010 484 L1280 484" fill="none" stroke="#6a5530" stroke-width="2.5" opacity="0.5"/><path d="M1010 545 L1240 545" fill="none" stroke="#58a04a" stroke-width="1.5" opacity="0.45"/><path d="M1010 585 L1280 585" fill="none" stroke="#58a04a" stroke-width="1.2" opacity="0.35"/><path d="M870 687 L1280 687" fill="none" stroke="#6a5530" stroke-width="2.5" opacity="0.5"/><path d="M870 703 L1280 703" fill="none" stroke="#3f8040" stroke-width="0.8" opacity="0.25"/><path d="M900 728 L1280 728" fill="none" stroke="#3f8040" stroke-width="0.7" opacity="0.2"/><path d="M1000 150 L1280 150" fill="none" stroke="#3f8040" stroke-width="0.8" opacity="0.3"/><path d="M1000 230 L1280 230" fill="none" stroke="#3f8040" stroke-width="0.8" opacity="0.25"/><path d="M1000 330 L1280 330" fill="none" stroke="#3f8040" stroke-width="1" opacity="0.3"/><circle cx="1146" cy="305" r="49" fill="none" stroke="#58a04a" stroke-width="2.2" opacity=".55"/><path d="M1090.8 258.7 A72.0 72.0 0 1 1 1133.5 375.9" fill="none" stroke="#2f8a86" stroke-width="1.1" opacity="0.5"/><path d="M1086.9 234.5 A92.0 92.0 0 1 1 1192.0 384.7" fill="none" stroke="#2f8a86" stroke-width="1" opacity="0.45"/><path d="M1012 262 Q1055 250 1075 320 Q1100 410 1180 405" fill="none" stroke="#2f8a86" stroke-width="1.1" opacity="0.45"/><path d="M1010 395 Q1050 310 1146 232" fill="none" stroke="#2f8a86" stroke-width="1" opacity="0.35"/><path d="M1015 205 L1055 235 L1040 250 Z" fill="none" stroke="#2f8a86" stroke-width="1" opacity="0.35"/><path d="M1127.4 389.3 A49.0 49.0 0 1 1 1038.6 389.3" fill="none" stroke="#58a04a" stroke-width="1.8" opacity="0.4"/><circle cx="1123.5" cy="514" r="15" fill="none" stroke="#58a04a" stroke-width="1.3" opacity=".3"/><circle cx="1123.5" cy="514" r="7" fill="none" stroke="#58a04a" stroke-width="1.3" opacity=".3"/><path d="M1075 440 Q1105 500 1092 560" fill="none" stroke="#58a04a" stroke-width="1.4" opacity="0.3"/><rect x="1041" y="515" width="18" height="24" fill="none" stroke="#3f8040" stroke-width="1" opacity=".35"/><rect x="1033" y="520" width="6" height="5" fill="none" stroke="#3f8040" stroke-width=".8" opacity=".3"/><rect x="1062" y="520" width="6" height="5" fill="none" stroke="#3f8040" stroke-width=".8" opacity=".3"/><rect x="1033" y="531" width="6" height="5" fill="none" stroke="#3f8040" stroke-width=".8" opacity=".3"/><rect x="1062" y="531" width="6" height="5" fill="none" stroke="#3f8040" stroke-width=".8" opacity=".3"/><rect x="1047" y="507" width="6" height="5" fill="none" stroke="#3f8040" stroke-width=".8" opacity=".3"/><rect x="1047" y="541" width="6" height="5" fill="none" stroke="#3f8040" stroke-width=".8" opacity=".3"/><rect x="1041" y="576" width="18" height="24" fill="none" stroke="#3f8040" stroke-width="1" opacity=".35"/><rect x="1033" y="581" width="6" height="5" fill="none" stroke="#3f8040" stroke-width=".8" opacity=".3"/><rect x="1062" y="581" width="6" height="5" fill="none" stroke="#3f8040" stroke-width=".8" opacity=".3"/><rect x="1033" y="592" width="6" height="5" fill="none" stroke="#3f8040" stroke-width=".8" opacity=".3"/><rect x="1062" y="592" width="6" height="5" fill="none" stroke="#3f8040" stroke-width=".8" opacity=".3"/><rect x="1047" y="568" width="6" height="5" fill="none" stroke="#3f8040" stroke-width=".8" opacity=".3"/><rect x="1047" y="602" width="6" height="5" fill="none" stroke="#3f8040" stroke-width=".8" opacity=".3"/><rect x="1041" y="636" width="18" height="24" fill="none" stroke="#3f8040" stroke-width="1" opacity=".35"/><rect x="1033" y="641" width="6" height="5" fill="none" stroke="#3f8040" stroke-width=".8" opacity=".3"/><rect x="1062" y="641" width="6" height="5" fill="none" stroke="#3f8040" stroke-width=".8" opacity=".3"/><rect x="1033" y="652" width="6" height="5" fill="none" stroke="#3f8040" stroke-width=".8" opacity=".3"/><rect x="1062" y="652" width="6" height="5" fill="none" stroke="#3f8040" stroke-width=".8" opacity=".3"/><rect x="1047" y="628" width="6" height="5" fill="none" stroke="#3f8040" stroke-width=".8" opacity=".3"/><rect x="1047" y="662" width="6" height="5" fill="none" stroke="#3f8040" stroke-width=".8" opacity=".3"/><rect x="1084" y="636" width="18" height="24" fill="none" stroke="#3f8040" stroke-width="1" opacity=".35"/><rect x="1076" y="641" width="6" height="5" fill="none" stroke="#3f8040" stroke-width=".8" opacity=".3"/><rect x="1105" y="641" width="6" height="5" fill="none" stroke="#3f8040" stroke-width=".8" opacity=".3"/><rect x="1076" y="652" width="6" height="5" fill="none" stroke="#3f8040" stroke-width=".8" opacity=".3"/><rect x="1105" y="652" width="6" height="5" fill="none" stroke="#3f8040" stroke-width=".8" opacity=".3"/><rect x="1090" y="628" width="6" height="5" fill="none" stroke="#3f8040" stroke-width=".8" opacity=".3"/><rect x="1090" y="662" width="6" height="5" fill="none" stroke="#3f8040" stroke-width=".8" opacity=".3"/><rect x="1152" y="525" width="46" height="117" rx="14" fill="none" stroke="#3f8040" stroke-width="1" opacity=".35"/><rect x="1142" y="532" width="6" height="6" fill="none" stroke="#3f8040" stroke-width=".8" opacity=".3"/><rect x="1202" y="532" width="6" height="6" fill="none" stroke="#3f8040" stroke-width=".8" opacity=".3"/><rect x="1142" y="550" width="6" height="6" fill="none" stroke="#3f8040" stroke-width=".8" opacity=".3"/><rect x="1202" y="550" width="6" height="6" fill="none" stroke="#3f8040" stroke-width=".8" opacity=".3"/><rect x="1142" y="568" width="6" height="6" fill="none" stroke="#3f8040" stroke-width=".8" opacity=".3"/><rect x="1202" y="568" width="6" height="6" fill="none" stroke="#3f8040" stroke-width=".8" opacity=".3"/><rect x="1142" y="586" width="6" height="6" fill="none" stroke="#3f8040" stroke-width=".8" opacity=".3"/><rect x="1202" y="586" width="6" height="6" fill="none" stroke="#3f8040" stroke-width=".8" opacity=".3"/><rect x="1142" y="604" width="6" height="6" fill="none" stroke="#3f8040" stroke-width=".8" opacity=".3"/><rect x="1202" y="604" width="6" height="6" fill="none" stroke="#3f8040" stroke-width=".8" opacity=".3"/><rect x="1142" y="622" width="6" height="6" fill="none" stroke="#3f8040" stroke-width=".8" opacity=".3"/><rect x="1202" y="622" width="6" height="6" fill="none" stroke="#3f8040" stroke-width=".8" opacity=".3"/><path d="M1010 583.5 L1230 583.5" fill="none" stroke="#58a04a" stroke-width="1.2" opacity="0.4"/><path d="M1010 588 L1230 588" fill="none" stroke="#6a5530" stroke-width="1.5" opacity="0.4"/><path d="M1212 470 L1212 545" fill="none" stroke="#58a04a" stroke-width="1.2" opacity="0.4"/><path d="M1268.7 480 L1268.7 690" fill="none" stroke="#6a5530" stroke-width="1.5" opacity="0.4"/><circle cx="1098" cy="540" r="4" fill="none" stroke="#3f8040" stroke-width=".8" opacity=".3"/><circle cx="1098" cy="600" r="4" fill="none" stroke="#3f8040" stroke-width=".8" opacity=".3"/><circle cx="1170" cy="588" r="4" fill="none" stroke="#3f8040" stroke-width=".8" opacity=".3"/><circle cx="1245" cy="588" r="4" fill="none" stroke="#3f8040" stroke-width=".8" opacity=".3"/><rect x="1013" y="70" width="16" height="16" fill="none" stroke="#6a5530" stroke-width="1.5" opacity=".4"/><rect x="1013" y="305" width="16" height="16" fill="none" stroke="#6a5530" stroke-width="1.5" opacity=".4"/><rect x="1013" y="590" width="16" height="16" fill="none" stroke="#6a5530" stroke-width="1.5" opacity=".4"/><rect x="1085" y="258" width="40" height="25" fill="none" stroke="#6a5530" stroke-width="1.5" opacity=".4"/><rect x="1140" y="118" width="20" height="18" fill="none" stroke="#6a5530" stroke-width="1.5" opacity=".4"/><rect x="1228" y="100" width="18" height="14" fill="none" stroke="#6a5530" stroke-width="1.5" opacity=".4"/><path d="M1270 735 L1280 725 L1280 755 Z" fill="#6b5a35" opacity=".45"/><path d="M954 99 L962.5 87 L971 99 Z" fill="#8a7040" opacity=".6"/><path d="M1011.0 790.6 A449.0 449.0 0 0 1 925.6 633.3" fill="none" stroke="#3f8040" stroke-width="0.9" opacity="0.35"/><path d="M1017 300 L1017 350" fill="none" stroke="#6a5530" stroke-width="0.7" opacity="0.3"/><path d="M1021 300 L1021 350" fill="none" stroke="#6a5530" stroke-width="0.7" opacity="0.3"/><path d="M1025 300 L1025 350" fill="none" stroke="#6a5530" stroke-width="0.7" opacity="0.3"/><path d="M1029 300 L1029 350" fill="none" stroke="#6a5530" stroke-width="0.7" opacity="0.3"/><path d="M1033 300 L1033 350" fill="none" stroke="#6a5530" stroke-width="0.7" opacity="0.3"/><path d="M1037 300 L1037 350" fill="none" stroke="#6a5530" stroke-width="0.7" opacity="0.3"/><path d="M1041 300 L1041 350" fill="none" stroke="#6a5530" stroke-width="0.7" opacity="0.3"/><path d="M1045 300 L1045 350" fill="none" stroke="#6a5530" stroke-width="0.7" opacity="0.3"/><path d="M1049 300 L1049 350" fill="none" stroke="#6a5530" stroke-width="0.7" opacity="0.3"/><path d="M1053 300 L1053 350" fill="none" stroke="#6a5530" stroke-width="0.7" opacity="0.3"/><path d="M1057 300 L1057 350" fill="none" stroke="#6a5530" stroke-width="0.7" opacity="0.3"/><path d="M1061 300 L1061 350" fill="none" stroke="#6a5530" stroke-width="0.7" opacity="0.3"/><circle cx="880" cy="690" r="9" fill="none" stroke="#6a5530" stroke-width=".9" opacity=".35"/><path d="M899 680 L899 774" fill="none" stroke="#6a5530" stroke-width="0.8" opacity="0.25"/><path d="M908 680 L908 774" fill="none" stroke="#6a5530" stroke-width="0.8" opacity="0.25"/><path d="M920 690 L920 774" fill="none" stroke="#6a5530" stroke-width=".8" stroke-dasharray="6 4" opacity=".3"/><rect x="916" y="684.5" width="41" height="7" fill="none" stroke="#6a5530" stroke-width="1.6" opacity=".45"/><path d="M948.2 79.0 A240.0 240.0 0 0 1 916.1 -32.6" fill="none" stroke="#3f8040" stroke-width="0.7" opacity="0.14"/><path d="M917.0 97.0 A276.0 276.0 0 0 1 880.2 -31.4" fill="none" stroke="#3f8040" stroke-width="0.7" opacity="0.14"/><path d="M885.8 115.0 A312.0 312.0 0 0 1 844.2 -30.1" fill="none" stroke="#3f8040" stroke-width="0.7" opacity="0.14"/><path d="M854.6 133.0 A348.0 348.0 0 0 1 808.2 -28.9" fill="none" stroke="#3f8040" stroke-width="0.7" opacity="0.14"/><path d="M823.4 151.0 A384.0 384.0 0 0 1 772.2 -27.6" fill="none" stroke="#3f8040" stroke-width="0.7" opacity="0.14"/><path d="M700 0 L700 98" fill="none" stroke="#3f8040" stroke-width="0.7" opacity="0.12"/><path d="M760 0 L760 98" fill="none" stroke="#3f8040" stroke-width="0.7" opacity="0.12"/><path d="M820 0 L820 98" fill="none" stroke="#3f8040" stroke-width="0.7" opacity="0.12"/><path d="M855 0 L855 98" fill="none" stroke="#3f8040" stroke-width="0.7" opacity="0.12"/><path d="M660 32 L870 32" fill="none" stroke="#3f8040" stroke-width="0.7" opacity="0.1"/><path d="M660 55 L870 55" fill="none" stroke="#3f8040" stroke-width="0.7" opacity="0.1"/><path d="M660 88 L870 88" fill="none" stroke="#3f8040" stroke-width="0.7" opacity="0.1"/><path d="M870 0 L870 97" fill="none" stroke="#3f8040" stroke-width="1" opacity="0.35"/><path d="M880 0 L880 55" fill="none" stroke="#3f8040" stroke-width="0.8" opacity="0.3"/><circle cx="863" cy="18" r="3.5" fill="none" stroke="#3f8040" stroke-width=".8" opacity=".4"/><circle cx="863" cy="44" r="3.5" fill="none" stroke="#3f8040" stroke-width=".8" opacity=".4"/><circle cx="863" cy="53" r="3.5" fill="none" stroke="#3f8040" stroke-width=".8" opacity=".4"/><path d="M866 32 L1000 32" fill="none" stroke="#3f8040" stroke-width="0.7" opacity="0.25"/><path d="M866 55 L1000 55" fill="none" stroke="#3f8040" stroke-width="0.7" opacity="0.25"/><circle cx="882" cy="78" r="9" fill="none" stroke="#6a5530" stroke-width=".8" opacity=".35"/><path d="M955 40 L1000 20 L1040 75 L1000 95 Z" fill="none" stroke="#3f8040" stroke-width="0.8" opacity="0.3"/></svg>
<div class="bx" style="left:366px;top:98px;width:644px;height:583px;box-shadow:0 3px 12px rgba(0,0,0,.6);border-radius:6px 6px 0 0"></div>
<div class="bx" style="left:367px;top:99px;width:642px;height:581px;border:1px solid #878787;border-radius:5px 5px 0 0;background:#3b3e3f"></div>
<div class="bx" style="left:372px;top:100px;width:632px;height:1px;background:#000"></div>
<div class="bx" style="left:368px;top:189px;width:640px;height:1px;background:#2a2c2d"></div>
<div class="bx" style="left:496px;top:156px;width:508px;height:30px;background:#2b2c2d;border:1px solid #1d1e1f;border-radius:4px"></div>
<div class="bx" style="left:368px;top:190px;width:170px;height:489px;background:#222222"></div>
<div class="bx" style="left:538px;top:190px;width:1px;height:489px;background:#1c1c1c"></div>
<div class="bx" style="left:539px;top:190px;width:469px;height:459px;background:#2d2e30"></div>
<div class="bx" style="left:539px;top:215px;width:469px;height:1px;background:#3a3b3d"></div>
<div class="bx" style="left:748px;top:191px;width:1px;height:24px;background:#3a3b3d"></div>
<div class="bx" style="left:807px;top:191px;width:1px;height:24px;background:#3a3b3d"></div>
<div class="bx" style="left:873px;top:191px;width:1px;height:24px;background:#3a3b3d"></div>
<div class="bx" style="left:539px;top:649px;width:469px;height:1px;background:#1f2021"></div>
<div class="bx" style="left:539px;top:650px;width:469px;height:29px;background:#3b3e3f"></div>

<svg class="ic" style="left:0;top:0" width="1280" height="800">
<path d="M377.5 109.8 L386 109.8 L381.75 114 Z" fill="#fff"/>
<path d="M924 112 L928 108 L932 112 M928 108 L928 116" fill="none" stroke="#fff" stroke-width="2"/>
<rect x="946" y="111" width="8" height="2" fill="#fff"/>
<path d="M968 112 L976 112 M972 108 L972 116" stroke="#fff" stroke-width="2"/>
<path d="M991 109 L998 116 M998 109 L991 116" stroke="#fff" stroke-width="2.2"/>
<path d="M387 164.5 L380.5 171 L387 177.5 M381 171 L394 171" fill="none" stroke="#9a9c9c" stroke-width="3.2"/>
<path d="M418 164.5 L424.5 171 L418 177.5 M424 171 L411 171" fill="none" stroke="#9a9c9c" stroke-width="3.2"/>
<path d="M442.2 172.2 L449 165.8 L455.8 172.2 M449 167 L449 179" fill="none" stroke="#eeeeec" stroke-width="3.4"/>
<path d="M471 172.5 L480 163 L489 172.5 L486.2 172.5 L486.2 179 L481.3 179 L481.3 174 L478.6 174 L478.6 179 L473.7 179 L473.7 172.5 Z" fill="#eeeeec"/>
<rect x="484" y="164" width="2" height="4" fill="#eeeeec"/>
<g transform="translate(500.3,160.8) scale(0.73,0.8)">
<rect x="16.4" y="3" width="3.6" height="6" fill="#f2e6d8" stroke="#9b7a55" stroke-width=".5"/>
<path d="M4.8 11 L4.8 22.5 L19.2 22.5 L19.2 11 L12 5 Z" fill="url(#gHome)" stroke="#9b7a55" stroke-width=".7"/>
<path d="M1.8 12.4 L12 3.6 L22.2 12.4" fill="none" stroke="#5e0f0f" stroke-width="2.5"/>
<path d="M9.2 22.5 L9.2 16.5 Q11.8 13.3 14.5 16.5 L14.5 22.5 Z" fill="#c97a3c" stroke="#8c4a1a" stroke-width=".5"/>
</g>
<path d="M729 200.5 L739 200.5 L734 206 Z" fill="#9a9b9c"/>
<path d="M995.6 167.6 A5.3 5.3 0 1 1 990.6 164.7" fill="none" stroke="#d6d6d6" stroke-width="1.9"/>
<path d="M990 161.6 L997 165 L990 168.6 Z" fill="#d6d6d6"/>
</svg>

<div class="bx" style="left:0;top:774px;width:1280px;height:26px;background:#1d2023"></div>

<div class="bx" style="left:0;top:774px;width:1280px;height:1px;background:#17191b"></div>
<div class="bx" style="left:111px;top:775px;width:200px;height:25px;border-radius:4px 4px 0 0;background:linear-gradient(#28625b,#1e3f3f)"></div>
<div class="bx" style="left:930px;top:775px;width:39px;height:25px;background:#1b6d65"></div>
<div class="bx" style="left:969px;top:775px;width:41px;height:25px;background:#18191a"></div>
<div class="bx" style="left:941px;top:778px;width:20px;height:18px;border:1px solid #f4f4f4;background:#5eaea8"></div>
<svg class="ic" style="left:0;top:774px" width="1280" height="26" viewBox="0 774 1280 26">
<path d="M3.8 781.4 C6 779.5 9 778.8 11 779 C15.5 779.4 18 783 18 787 C18 791.5 14.5 795 10.5 795 C7.5 795 5 794 3.8 792.6 C6 793.2 8.5 793.3 10.5 792.9 C13.8 792.4 16 790 16 787 C16 783.6 13.5 781.2 10.5 780.9 C8.5 780.7 6 780.9 3.8 781.4 Z" fill="#72bf1f"/>
<path d="M6.9 787.3 Q9.5 789.8 16.2 789.3" fill="none" stroke="#72bf1f" stroke-width="1.4" stroke-linecap="round"/>
<circle cx="12.4" cy="785.5" r="2" fill="none" stroke="#72bf1f" stroke-width="1.1"/>
<circle cx="12.4" cy="785.5" r=".7" fill="#72bf1f"/>
<rect x="82" y="780" width="16" height="4" fill="#050505"/>
<rect x="83" y="780.3" width="14" height="1.4" fill="#6d6d6d"/>
<path d="M82 784 L98 784 L98 792.5 Q98 794 96.5 794 L83.5 794 Q82 794 82 792.5 Z" fill="#5b93c4"/>
<path d="M84 784 L96 784 L96 789 L84 789 Z" fill="#7eb3d6" opacity=".6"/>
<rect x="85" y="790" width="9.8" height="4" fill="#132a40"/>
<rect x="86" y="791" width="7.8" height="2.2" fill="#3b556d"/>
<rect x="105" y="781.8" width="4.2" height="1.5" fill="#cfcfcf"/>
<rect x="105" y="785.8" width="4.2" height="1.5" fill="#cfcfcf"/>
<rect x="105" y="789.8" width="4.2" height="1.5" fill="#cfcfcf"/>
<g transform="translate(113.4,777.1) scale(0.72,0.78)">
<rect x="16.4" y="3" width="3.6" height="6" fill="#f2e6d8" stroke="#9b7a55" stroke-width=".5"/>
<path d="M4.8 11 L4.8 22.5 L19.2 22.5 L19.2 11 L12 5 Z" fill="url(#gHome)" stroke="#9b7a55" stroke-width=".7"/>
<path d="M1.8 12.4 L12 3.6 L22.2 12.4" fill="none" stroke="#5e0f0f" stroke-width="2.5"/>
<path d="M9.2 22.5 L9.2 16.5 Q11.8 13.3 14.5 16.5 L14.5 22.5 Z" fill="#c97a3c" stroke="#8c4a1a" stroke-width=".5"/>
</g>
<g transform="translate(941.6,776.6) scale(0.755,0.81)">
<rect x="16.4" y="3" width="3.6" height="6" fill="#f2e6d8" stroke="#9b7a55" stroke-width=".5"/>
<path d="M4.8 11 L4.8 22.5 L19.2 22.5 L19.2 11 L12 5 Z" fill="url(#gHome)" stroke="#9b7a55" stroke-width=".7"/>
<path d="M1.8 12.4 L12 3.6 L22.2 12.4" fill="none" stroke="#5e0f0f" stroke-width="2.5"/>
<path d="M9.2 22.5 L9.2 16.5 Q11.8 13.3 14.5 16.5 L14.5 22.5 Z" fill="#c97a3c" stroke="#8c4a1a" stroke-width=".5"/>
</g>
<path d="M1015 784.5 L1018 784.5 L1022 780.5 L1022 793.5 L1018 789.5 L1015 789.5 Z" fill="#f2f2f2"/>
<path d="M1024 784 Q1026 787 1024 790" fill="none" stroke="#f2f2f2" stroke-width="1.6"/>
<path d="M1026.3 782 Q1029.8 787 1026.3 792" fill="none" stroke="#f2f2f2" stroke-width="1.6"/>
<path d="M1028.6 780.3 Q1033.2 787 1028.6 793.7" fill="none" stroke="#f2f2f2" stroke-width="1.4"/>
<circle cx="1049" cy="787.1" r="7.2" fill="#f2f2f2"/>
<path d="M1050.8 781.2 L1046 788 L1049 788 L1047.2 793 L1052 786.2 L1049 786.2 Z" fill="#1d2124"/>
<path d="M1068 786 A5.5 5.5 0 0 1 1076 781.5" fill="none" stroke="#f2f2f2" stroke-width="2"/>
<path d="M1073.5 778.8 L1078 782 L1073.5 785 Z" fill="#f2f2f2"/>
<path d="M1078 787.5 A5.5 5.5 0 0 1 1070 792" fill="none" stroke="#f2f2f2" stroke-width="2"/>
<path d="M1072.5 795 L1068 791.8 L1072.5 788.8 Z" fill="#f2f2f2"/>
<rect x="1096.5" y="782.5" width="4.5" height="3" fill="none" stroke="#f4f4f4" stroke-width="1.1"/>
<rect x="1098.3" y="785.5" width="1" height="2" fill="#f4f4f4"/>
<rect x="1092" y="787" width="13" height="1.1" fill="#f4f4f4"/>
<rect x="1094.5" y="788" width="1" height="1.5" fill="#f4f4f4"/><rect x="1101.5" y="788" width="1" height="1.5" fill="#f4f4f4"/>
<rect x="1093.3" y="789.5" width="4.3" height="3.2" fill="none" stroke="#f4f4f4" stroke-width="1.1"/>
<rect x="1099.9" y="789.5" width="4.3" height="3.2" fill="none" stroke="#f4f4f4" stroke-width="1.1"/>
<path d="M1267.2 780.3 Q1272 781 1271.6 786.5 L1271.8 789.2 L1273.3 791.5 L1261 791.5 L1262.6 789.2 L1262.8 786.5 Q1262.5 781 1267.2 780.3 Z" fill="#f4f4f4"/>
<path d="M1265.5 792.6 L1269 792.6 Q1268.6 794.4 1267.2 794.4 Q1265.9 794.4 1265.5 792.6 Z" fill="#f4f4f4"/>
</svg>

<svg class="ic" style="left:46px;top:128px;width:48px;height:48px" viewBox="0 0 48 48" width="48" height="48">
<ellipse cx="25" cy="45.5" rx="14" ry="2" fill="#000" opacity=".3"/>
<path d="M10.5 13 L39.5 13 L39.2 42.5 Q25 47.8 10.8 42.5 Z" fill="url(#gTrash)"/>
<path d="M9.8 9 Q25 3.6 40.2 9 L40.2 13.2 Q25 17.6 9.8 13.2 Z" fill="url(#gLid)"/>
<path d="M9.8 13.2 Q25 17.6 40.2 13.2" fill="none" stroke="#8a8c90" stroke-width="1"/>
<path d="M20.5 8.5 L20.5 5 L29.5 5 L29.5 8.5" fill="none" stroke="#c3c5c8" stroke-width="1.4"/>
</svg><svg class="ic" style="left:47px;top:240px;width:48px;height:48px" viewBox="0 0 48 48" width="48" height="48">
<path d="M7.4 3 L39.7 3 L46.6 30.7 L1.2 30.7 Z" fill="url(#gDrive)" stroke="#bdbdbd" stroke-width=".6"/>
<ellipse cx="24.5" cy="18" rx="17" ry="11" fill="none" stroke="#a8a8a8" stroke-width=".9"/>
<ellipse cx="24.5" cy="18" rx="5.5" ry="3" fill="none" stroke="#9e9e9e" stroke-width=".9"/>
<path d="M13 9 Q22 4 28 4.5" fill="none" stroke="#f6f6f6" stroke-width="1.6"/>
<rect x="1.2" y="30.7" width="45.4" height="5.9" fill="url(#gDriveF)"/>
<rect x="7.8" y="31.5" width="14" height="3.5" fill="url(#gSlot)"/>
</svg><svg class="ic" style="left:47px;top:347px;width:48px;height:48px" viewBox="0 0 48 48" width="48" height="48">
<rect x="5" y="1.9" width="16.2" height="5" rx=".6" fill="#fafafa"/>
<rect x="3" y="4.8" width="42.2" height="4.5" fill="#f3f3f7"/>
<rect x="1.2" y="8.1" width="45.4" height="29.6" rx=".8" fill="url(#gFold)" stroke="#b08d55" stroke-width=".8"/>
<rect x="2" y="8.9" width="43.8" height="1.2" fill="#f8ecd6" opacity=".8"/>
<path d="M24 17 L16.2 24.6 L18.5 24.6 L18.5 31.5 L22.6 31.5 L22.6 27 L25.4 27 L25.4 31.5 L29.5 31.5 L29.5 24.6 L31.8 24.6 L28.8 21.6 L28.8 18.6 L27.6 18.6 L27.6 20.4 Z" fill="#b9975c"/>
</svg><svg class="ic" style="left:384px;top:224px;width:24px;height:24px" viewBox="0 0 24 24" width="24" height="24">
<path d="M2.3 1 L21.8 1 L24 20 L0 20 Z" fill="url(#gDrive)"/>
<ellipse cx="12" cy="12" rx="8.6" ry="6.8" fill="none" stroke="#a5a5a5" stroke-width=".8"/>
<ellipse cx="12" cy="13" rx="3" ry="2" fill="none" stroke="#a0a0a0" stroke-width=".8"/>
<path d="M4 6 Q9 3 16 3.5" fill="none" stroke="#fafafa" stroke-width="1"/>
<path d="M0.5 20 L23.5 20 L23.5 23.5 L0.5 23.5 Z" fill="url(#gDriveF)"/>
<rect x="2" y="20.5" width="5" height="1.6" fill="#0a0a0a"/>
</svg><svg class="ic" style="left:384px;top:287px;width:24px;height:24px" viewBox="0 0 24 24" width="24" height="24">
<rect x="16.4" y="3" width="3.6" height="6" fill="#f2e6d8" stroke="#9b7a55" stroke-width=".5"/>
<path d="M4.8 11 L4.8 22.5 L19.2 22.5 L19.2 11 L12 5 Z" fill="url(#gHome)" stroke="#9b7a55" stroke-width=".7"/>
<path d="M1.8 12.4 L12 3.6 L22.2 12.4" fill="none" stroke="#5e0f0f" stroke-width="2.5"/>
<path d="M9.2 22.5 L9.2 16.5 Q11.8 13.3 14.5 16.5 L14.5 22.5 Z" fill="#c97a3c" stroke="#8c4a1a" stroke-width=".5"/>
</svg><svg class="ic" style="left:384px;top:318px;width:24px;height:24px" viewBox="0 0 24 24" width="24" height="24">
<rect x="1" y="2.6" width="22" height="1" fill="#8d8d8d"/>
<rect x="1" y="3.5" width="22" height="3" fill="#050505"/>
<path d="M0.2 6.4 L23.8 6.4 L23.8 21 Q23.8 22.2 22.6 22.2 L1.4 22.2 Q0.2 22.2 0.2 21 Z" fill="url(#gDesk)"/>
<rect x="0.2" y="6.4" width="23.6" height="15.8" fill="url(#gDeskR)"/>
<rect x="0.6" y="6.4" width="1.4" height="15.5" fill="#8cbde0" opacity=".5"/>
<rect x="22" y="6.4" width="1.4" height="15.5" fill="#8cbde0" opacity=".5"/>
<rect x="4" y="17" width="16" height="5.2" fill="#1b3049"/>
<rect x="5" y="18" width="14" height="4" fill="#3d566f"/>
</svg><svg class="ic" style="left:383.4px;top:349.2px;width:24px;height:24px" viewBox="0 0 48 48" width="24" height="24">
<ellipse cx="25" cy="45.5" rx="14" ry="2" fill="#000" opacity=".3"/>
<path d="M10.5 13 L39.5 13 L39.2 42.5 Q25 47.8 10.8 42.5 Z" fill="url(#gTrash)"/>
<path d="M9.8 9 Q25 3.6 40.2 9 L40.2 13.2 Q25 17.6 9.8 13.2 Z" fill="url(#gLid)"/>
<path d="M9.8 13.2 Q25 17.6 40.2 13.2" fill="none" stroke="#8a8c90" stroke-width="1"/>
<path d="M20.5 8.5 L20.5 5 L29.5 5 L29.5 8.5" fill="none" stroke="#c3c5c8" stroke-width="1.4"/>
</svg><svg class="ic" style="left:384px;top:380px;width:24px;height:24px" viewBox="0 0 24 24" width="24" height="24">
<path d="M4 2 L14.5 2 L20.5 8 L20.5 22 L4 22 Z" fill="url(#gDoc)" stroke="#111" stroke-width=".5" stroke-opacity=".5"/>
<path d="M14.5 2 L14.5 8 L20.5 8 Z" fill="#c9c9c9"/>
</svg><svg class="ic" style="left:384px;top:411px;width:24px;height:24px" viewBox="0 0 24 24" width="24" height="24">
<path d="M7.2 3.6 L18.9 0.9 L18.9 3.6 L7.2 6.3 Z" fill="#5aaaea"/>
<path d="M8 5 L8 19.5" fill="none" stroke="#4597dc" stroke-width="1.3"/>
<path d="M18.3 2 L18.3 16" fill="none" stroke="#4597dc" stroke-width="1.3"/>
<ellipse cx="4.6" cy="19.6" rx="3.6" ry="2.9" transform="rotate(-15 4.6 19.6)" fill="#3d8dd4"/>
<ellipse cx="15.2" cy="16.2" rx="3.6" ry="2.9" transform="rotate(-15 15.2 16.2)" fill="#3d8dd4"/>
</svg><svg class="ic" style="left:384px;top:442px;width:24px;height:24px" viewBox="0 0 24 24" width="24" height="24">
<path d="M1.3 9.1 L13.6 2.8 L17.5 10.5 L5.2 16.8 Z" fill="#55584a" stroke="#e8e8e8" stroke-width="1"/>
<rect x="7" y="7.6" width="14.2" height="14.3" fill="#fafafa"/>
<rect x="8.5" y="9.5" width="11" height="8.2" fill="url(#gPic)"/>
</svg><svg class="ic" style="left:384px;top:473px;width:24px;height:24px" viewBox="0 0 24 24" width="24" height="24">
<rect x="2.5" y="1.5" width="19" height="21" fill="#111"/>
<rect x="6" y="2.5" width="12" height="9" fill="url(#gVid)"/>
<rect x="6" y="12.5" width="12" height="9" fill="url(#gVid)"/>
<g fill="#ddd">
<rect x="3.6" y="3" width="1" height="1"/><rect x="3.6" y="6" width="1" height="1"/><rect x="3.6" y="9" width="1" height="1"/><rect x="3.6" y="12" width="1" height="1"/><rect x="3.6" y="15" width="1" height="1"/><rect x="3.6" y="18" width="1" height="1"/><rect x="3.6" y="21" width="1" height="1"/>
<rect x="19.4" y="3" width="1" height="1"/><rect x="19.4" y="6" width="1" height="1"/><rect x="19.4" y="9" width="1" height="1"/><rect x="19.4" y="12" width="1" height="1"/><rect x="19.4" y="15" width="1" height="1"/><rect x="19.4" y="18" width="1" height="1"/><rect x="19.4" y="21" width="1" height="1"/>
</g>
</svg><svg class="ic" style="left:384px;top:504px;width:24px;height:24px" viewBox="0 0 24 24" width="24" height="24">
<circle cx="12" cy="12" r="10.6" fill="url(#gDl)"/>
<path d="M10.6 4.8 L13.4 4.8 L13.4 12 L17.6 12 L12 18.2 L6.4 12 L10.6 12 Z" fill="#fff"/>
</svg><svg class="ic" style="left:384px;top:566px;width:24px;height:24px" viewBox="0 0 24 24" width="24" height="24">
<path d="M1.2 9.2 Q12 -0.5 22.8 9.2" fill="none" stroke="url(#gWifi)" stroke-width="3"/>
<path d="M4.8 12.8 Q12 6.2 19.2 12.8" fill="none" stroke="url(#gWifi)" stroke-width="3"/>
<path d="M8.3 16.3 Q12 13 15.7 16.3" fill="none" stroke="#4a98dc" stroke-width="3"/>
<path d="M9.3 18.3 L12 16 L14.7 18.3 L12 20.8 Z" fill="#3a88d0"/>
</svg><svg class="ic" style="left:542px;top:217px;width:24px;height:24px" viewBox="0 0 24 24" width="24" height="24">
<path d="M2.8 8 L3.3 4.8 L14.2 4.8 L14.7 7 L22 7 L22 8 Z" fill="#fbfbfb"/>
<rect x="1.2" y="7.8" width="21.4" height="15" rx=".6" fill="url(#gFold)" stroke="#a8864e" stroke-width=".7"/>
<rect x="2" y="8.6" width="19.8" height="1" fill="#f8ecd4" opacity=".8"/>
</svg><svg class="ic" style="left:542px;top:246px;width:24px;height:24px" viewBox="0 0 24 24" width="24" height="24">
<rect x="1" y="2.6" width="22" height="1" fill="#8d8d8d"/>
<rect x="1" y="3.5" width="22" height="3" fill="#050505"/>
<path d="M0.2 6.4 L23.8 6.4 L23.8 21 Q23.8 22.2 22.6 22.2 L1.4 22.2 Q0.2 22.2 0.2 21 Z" fill="url(#gDesk)"/>
<rect x="0.2" y="6.4" width="23.6" height="15.8" fill="url(#gDeskR)"/>
<rect x="0.6" y="6.4" width="1.4" height="15.5" fill="#8cbde0" opacity=".5"/>
<rect x="22" y="6.4" width="1.4" height="15.5" fill="#8cbde0" opacity=".5"/>
<rect x="4" y="17" width="16" height="5.2" fill="#1b3049"/>
<rect x="5" y="18" width="14" height="4" fill="#3d566f"/>
</svg><svg class="ic" style="left:542px;top:274px;width:24px;height:24px" viewBox="0 0 24 24" width="24" height="24">
<path d="M4 2 L14.5 2 L20.5 8 L20.5 22 L4 22 Z" fill="url(#gDoc)" stroke="#111" stroke-width=".5" stroke-opacity=".5"/>
<path d="M14.5 2 L14.5 8 L20.5 8 Z" fill="#c9c9c9"/>
</svg><svg class="ic" style="left:542px;top:302px;width:24px;height:24px" viewBox="0 0 24 24" width="24" height="24">
<circle cx="12" cy="12" r="10.6" fill="url(#gDl)"/>
<path d="M10.6 4.8 L13.4 4.8 L13.4 12 L17.6 12 L12 18.2 L6.4 12 L10.6 12 Z" fill="#fff"/>
</svg><svg class="ic" style="left:542px;top:330px;width:24px;height:24px" viewBox="0 0 24 24" width="24" height="24">
<path d="M7.2 3.6 L18.9 0.9 L18.9 3.6 L7.2 6.3 Z" fill="#5aaaea"/>
<path d="M8 5 L8 19.5" fill="none" stroke="#4597dc" stroke-width="1.3"/>
<path d="M18.3 2 L18.3 16" fill="none" stroke="#4597dc" stroke-width="1.3"/>
<ellipse cx="4.6" cy="19.6" rx="3.6" ry="2.9" transform="rotate(-15 4.6 19.6)" fill="#3d8dd4"/>
<ellipse cx="15.2" cy="16.2" rx="3.6" ry="2.9" transform="rotate(-15 15.2 16.2)" fill="#3d8dd4"/>
</svg><svg class="ic" style="left:542px;top:358px;width:24px;height:24px" viewBox="0 0 24 24" width="24" height="24">
<path d="M1.3 9.1 L13.6 2.8 L17.5 10.5 L5.2 16.8 Z" fill="#55584a" stroke="#e8e8e8" stroke-width="1"/>
<rect x="7" y="7.6" width="14.2" height="14.3" fill="#fafafa"/>
<rect x="8.5" y="9.5" width="11" height="8.2" fill="url(#gPic)"/>
</svg><svg class="ic" style="left:542px;top:386px;width:24px;height:24px" viewBox="0 0 24 24" width="24" height="24">
<path d="M8.6 13.6 L9.4 5 M10.6 14.4 L17.6 8.8" fill="none" stroke="#45aee8" stroke-width="2.8"/>
<path d="M9.7 1 L5.6 6.6 L13 6.6 Z" fill="#45aee8"/>
<path d="M21.4 6.2 L14.6 6.4 L19 11.8 Z" fill="#45aee8"/>
<circle cx="6.2" cy="19" r="5.2" fill="#2d2e30"/>
<circle cx="6.2" cy="19" r="4" fill="url(#gBall)"/>
</svg><svg class="ic" style="left:542px;top:414px;width:24px;height:24px" viewBox="0 0 24 24" width="24" height="24">
<path d="M2.2 0.8 L2.2 22.2 L23 22.2 Z" fill="#c2c3c8" stroke="#85868c" stroke-width=".7"/>
<path d="M6.5 10.5 L6.5 18.5 L14.5 18.5 Z" fill="#2d2e30" stroke="#85868c" stroke-width=".5"/>
</svg><svg class="ic" style="left:542px;top:442px;width:24px;height:24px" viewBox="0 0 24 24" width="24" height="24">
<rect x="2.5" y="1.5" width="19" height="21" fill="#111"/>
<rect x="6" y="2.5" width="12" height="9" fill="url(#gVid)"/>
<rect x="6" y="12.5" width="12" height="9" fill="url(#gVid)"/>
<g fill="#ddd">
<rect x="3.6" y="3" width="1" height="1"/><rect x="3.6" y="6" width="1" height="1"/><rect x="3.6" y="9" width="1" height="1"/><rect x="3.6" y="12" width="1" height="1"/><rect x="3.6" y="15" width="1" height="1"/><rect x="3.6" y="18" width="1" height="1"/><rect x="3.6" y="21" width="1" height="1"/>
<rect x="19.4" y="3" width="1" height="1"/><rect x="19.4" y="6" width="1" height="1"/><rect x="19.4" y="9" width="1" height="1"/><rect x="19.4" y="12" width="1" height="1"/><rect x="19.4" y="15" width="1" height="1"/><rect x="19.4" y="18" width="1" height="1"/><rect x="19.4" y="21" width="1" height="1"/>
</g>
</svg>
<div class="tx" style="left:50.19px;top:183px;font-weight:normal;color:#f2f2f2;transform:scaleX(1.0350);text-shadow:0 1px 2px rgba(0,0,0,.9)">Trash</div><div class="tx" style="left:29.30px;top:289px;font-weight:normal;color:#f2f2f2;transform:scaleX(1.0289);text-shadow:0 1px 2px rgba(0,0,0,.9)">File System</div><div class="tx" style="left:49.08px;top:395px;font-weight:normal;color:#f2f2f2;transform:scaleX(1.1342);text-shadow:0 1px 2px rgba(0,0,0,.9)">Home</div><div class="tx" style="left:580.42px;top:103px;font-weight:bold;color:#f4f4f4;transform:scaleX(1.0597);">maug - File Manager</div><div class="tx" style="left:376.10px;top:128px;font-weight:normal;color:#e6e6e6;transform:scaleX(1.0820);">File</div><div class="tx" style="left:417.64px;top:128px;font-weight:normal;color:#e6e6e6;transform:scaleX(1.0858);">Edit</div><div class="tx" style="left:462.54px;top:128px;font-weight:normal;color:#e6e6e6;transform:scaleX(1.0354);">View</div><div class="tx" style="left:513.62px;top:128px;font-weight:normal;color:#e6e6e6;transform:scaleX(1.0285);">Go</div><div class="tx" style="left:551.55px;top:128px;font-weight:normal;color:#e6e6e6;transform:scaleX(1.1197);">Help</div><div class="tx" style="left:522.36px;top:161px;font-weight:normal;color:#eeeeec;transform:scaleX(1.1336);">/home/maug/</div><div class="tx" style="left:376.21px;top:197px;font-weight:bold;color:#f4f4f4;transform:scaleX(0.9494);">DEVICES</div><div class="tx" style="left:411.10px;top:228px;font-weight:normal;color:#eeeeec;transform:scaleX(1.0223);">File System</div><div class="tx" style="left:375.69px;top:259px;font-weight:bold;color:#f4f4f4;transform:scaleX(0.8931);">PLACES</div><div class="tx" style="left:411.22px;top:290px;font-weight:normal;color:#eeeeec;transform:scaleX(1.1300);">maug</div><div class="tx" style="left:411.86px;top:321px;font-weight:normal;color:#eeeeec;transform:scaleX(1.0806);">Desktop</div><div class="tx" style="left:412.82px;top:352px;font-weight:normal;color:#eeeeec;transform:scaleX(1.0063);">Trash</div><div class="tx" style="left:411.84px;top:383px;font-weight:normal;color:#eeeeec;transform:scaleX(1.0875);">Documents</div><div class="tx" style="left:411.86px;top:414px;font-weight:normal;color:#eeeeec;transform:scaleX(1.0808);">Music</div><div class="tx" style="left:410.94px;top:445px;font-weight:normal;color:#eeeeec;transform:scaleX(1.0625);">Pictures</div><div class="tx" style="left:411.92px;top:476px;font-weight:normal;color:#eeeeec;transform:scaleX(1.0364);">Videos</div><div class="tx" style="left:411.82px;top:507px;font-weight:normal;color:#eeeeec;transform:scaleX(1.0967);">Downloads</div><div class="tx" style="left:376.08px;top:538px;font-weight:bold;color:#f4f4f4;transform:scaleX(1.0018);">NETWORK</div><div class="tx" style="left:411.22px;top:569px;font-weight:normal;color:#eeeeec;transform:scaleX(1.0918);">Browse Network</div><div class="tx" style="left:544.92px;top:193px;font-weight:bold;color:#8f9192;transform:scaleX(1.1257);">Name</div><div class="tx" style="left:754.19px;top:193px;font-weight:bold;color:#8f9192;transform:scaleX(0.9634);">Size</div><div class="tx" style="left:814.21px;top:193px;font-weight:bold;color:#8f9192;transform:scaleX(1.0427);">Type</div><div class="tx" style="left:878.77px;top:193px;font-weight:bold;color:#8f9192;transform:scaleX(1.1017);">Date Modified</div><div class="tx" style="left:570.16px;top:220px;font-weight:normal;color:#eeeeec;transform:scaleX(1.1833);">bin</div><div class="tx" style="left:755.92px;top:220px;font-weight:normal;color:#eeeeec;transform:scaleX(1.0337);">0 bytes</div><div class="tx" style="left:812.50px;top:220px;font-weight:normal;color:#eeeeec;transform:scaleX(1.1229);">folder</div><div class="tx" style="left:877.31px;top:220px;font-weight:normal;color:#eeeeec;transform:scaleX(1.0326);">05/14/2019</div><div class="tx" style="left:570.85px;top:248px;font-weight:normal;color:#eeeeec;transform:scaleX(1.0867);">Desktop</div><div class="tx" style="left:755.92px;top:248px;font-weight:normal;color:#eeeeec;transform:scaleX(1.0337);">0 bytes</div><div class="tx" style="left:812.50px;top:248px;font-weight:normal;color:#eeeeec;transform:scaleX(1.1229);">folder</div><div class="tx" style="left:877.31px;top:248px;font-weight:normal;color:#eeeeec;transform:scaleX(1.0326);">05/14/2019</div><div class="tx" style="left:570.84px;top:276px;font-weight:normal;color:#eeeeec;transform:scaleX(1.0896);">Documents</div><div class="tx" style="left:755.92px;top:276px;font-weight:normal;color:#eeeeec;transform:scaleX(1.0337);">0 bytes</div><div class="tx" style="left:812.50px;top:276px;font-weight:normal;color:#eeeeec;transform:scaleX(1.1229);">folder</div><div class="tx" style="left:877.31px;top:276px;font-weight:normal;color:#eeeeec;transform:scaleX(1.0326);">05/14/2019</div><div class="tx" style="left:570.81px;top:304px;font-weight:normal;color:#eeeeec;transform:scaleX(1.0960);">Downloads</div><div class="tx" style="left:755.92px;top:304px;font-weight:normal;color:#eeeeec;transform:scaleX(1.0337);">0 bytes</div><div class="tx" style="left:812.50px;top:304px;font-weight:normal;color:#eeeeec;transform:scaleX(1.1229);">folder</div><div class="tx" style="left:877.31px;top:304px;font-weight:normal;color:#eeeeec;transform:scaleX(1.0326);">05/14/2019</div><div class="tx" style="left:570.86px;top:332px;font-weight:normal;color:#eeeeec;transform:scaleX(1.0810);">Music</div><div class="tx" style="left:755.92px;top:332px;font-weight:normal;color:#eeeeec;transform:scaleX(1.0337);">0 bytes</div><div class="tx" style="left:812.50px;top:332px;font-weight:normal;color:#eeeeec;transform:scaleX(1.1229);">folder</div><div class="tx" style="left:877.31px;top:332px;font-weight:normal;color:#eeeeec;transform:scaleX(1.0326);">05/14/2019</div><div class="tx" style="left:569.98px;top:360px;font-weight:normal;color:#eeeeec;transform:scaleX(1.0601);">Pictures</div><div class="tx" style="left:755.92px;top:360px;font-weight:normal;color:#eeeeec;transform:scaleX(1.0337);">0 bytes</div><div class="tx" style="left:812.50px;top:360px;font-weight:normal;color:#eeeeec;transform:scaleX(1.1229);">folder</div><div class="tx" style="left:877.31px;top:360px;font-weight:normal;color:#eeeeec;transform:scaleX(1.0326);">05/14/2019</div><div class="tx" style="left:570.80px;top:388px;font-weight:normal;color:#eeeeec;transform:scaleX(1.0991);">Public</div><div class="tx" style="left:755.92px;top:388px;font-weight:normal;color:#eeeeec;transform:scaleX(1.0337);">0 bytes</div><div class="tx" style="left:812.50px;top:388px;font-weight:normal;color:#eeeeec;transform:scaleX(1.1229);">folder</div><div class="tx" style="left:877.31px;top:388px;font-weight:normal;color:#eeeeec;transform:scaleX(1.0326);">05/14/2019</div><div class="tx" style="left:571.78px;top:416px;font-weight:normal;color:#eeeeec;transform:scaleX(1.0553);">Templates</div><div class="tx" style="left:755.92px;top:416px;font-weight:normal;color:#eeeeec;transform:scaleX(1.0337);">0 bytes</div><div class="tx" style="left:812.50px;top:416px;font-weight:normal;color:#eeeeec;transform:scaleX(1.1229);">folder</div><div class="tx" style="left:877.31px;top:416px;font-weight:normal;color:#eeeeec;transform:scaleX(1.0326);">05/14/2019</div><div class="tx" style="left:570.92px;top:444px;font-weight:normal;color:#eeeeec;transform:scaleX(1.0424);">Videos</div><div class="tx" style="left:755.92px;top:444px;font-weight:normal;color:#eeeeec;transform:scaleX(1.0337);">0 bytes</div><div class="tx" style="left:812.50px;top:444px;font-weight:normal;color:#eeeeec;transform:scaleX(1.1229);">folder</div><div class="tx" style="left:877.31px;top:444px;font-weight:normal;color:#eeeeec;transform:scaleX(1.0326);">05/14/2019</div><div class="tx" style="left:552.54px;top:655px;font-weight:normal;color:#eeeeec;transform:scaleX(1.0231);">9 items, Free space: 3.3 GiB</div><div class="tx" style="left:24.02px;top:778px;font-weight:normal;color:#eeeeee;transform:scaleX(1.0956);">Menu</div><div class="tx" style="left:138.21px;top:778px;font-weight:normal;color:#eeeeee;transform:scaleX(1.0607);">maug - File Manager</div><div class="tx" style="left:1123.01px;top:778px;font-weight:normal;color:#eeeeee;transform:scaleX(1.0277);">Thu 08 Aug, 19:42</div>
</body></html>
